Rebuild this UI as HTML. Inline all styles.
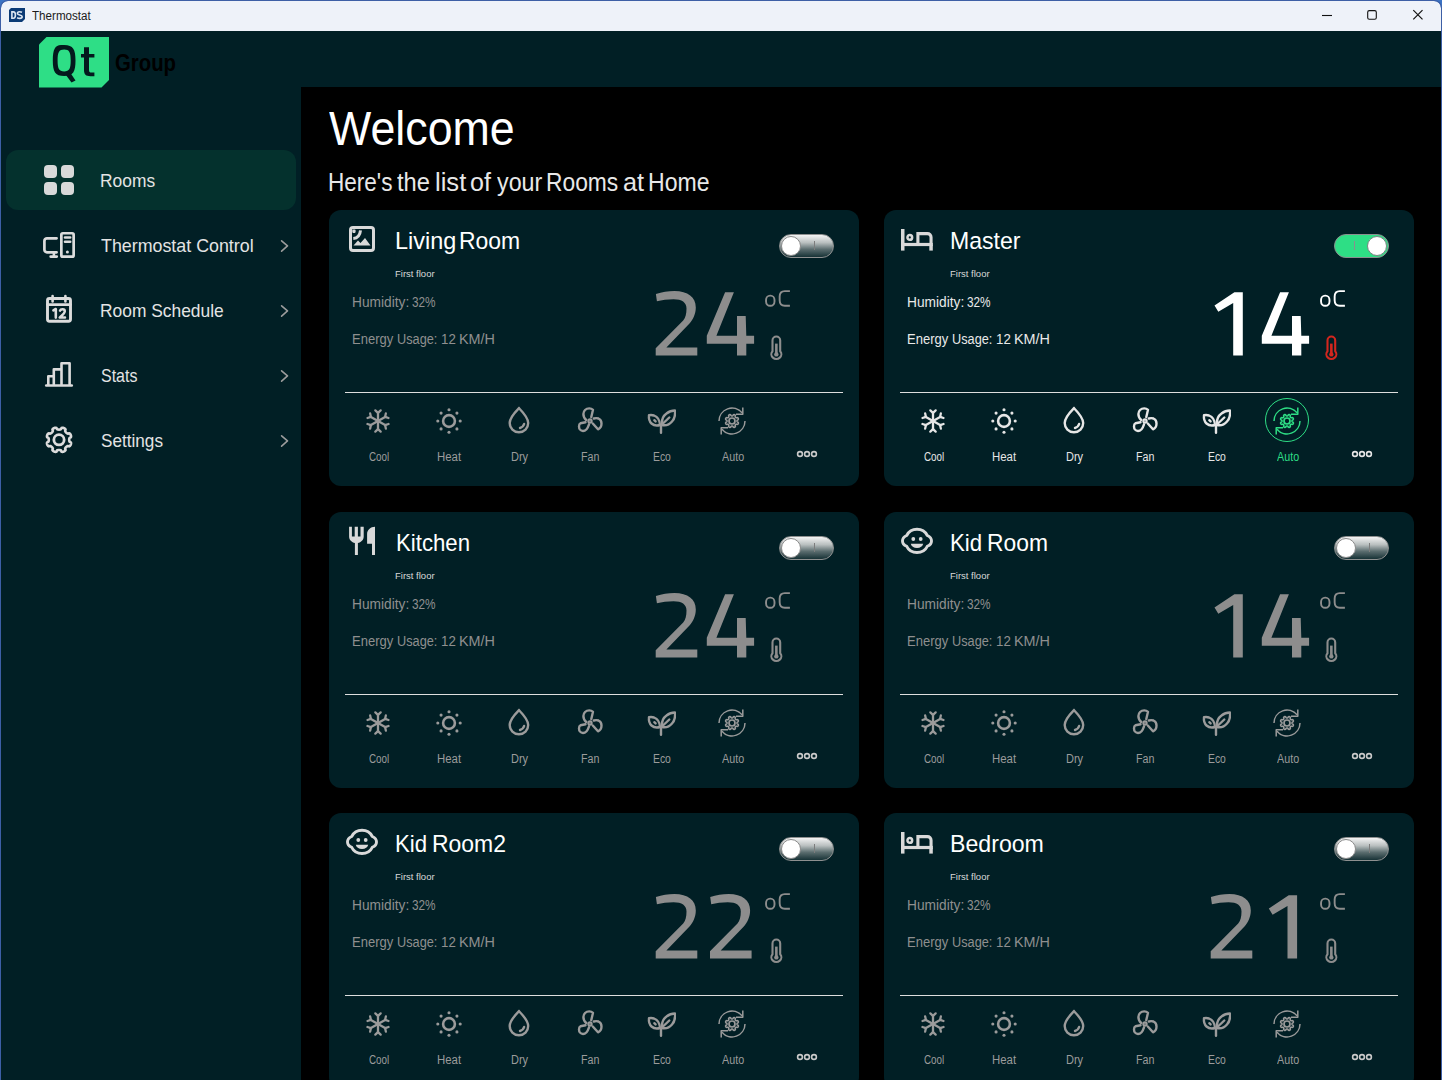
<!DOCTYPE html>
<html><head><meta charset="utf-8"><title>Thermostat</title>
<style>
html,body{margin:0;padding:0;}
body{width:1442px;height:1080px;overflow:hidden;position:relative;background:#3b73c4;font-family:"Liberation Sans",sans-serif;}
#frame{position:absolute;left:0;top:0;width:1440px;height:1079px;border:1px solid #3d5fa6;border-bottom:none;border-radius:8px 8px 0 0;pointer-events:none;}
#titlebar{position:absolute;left:1px;top:1px;width:1440px;height:30px;background:#eef2f9;border-radius:7px 7px 0 0;}
.t{position:absolute;white-space:pre;line-height:1;transform-origin:0 0;}
.card{position:absolute;width:530px;height:276px;border-radius:12px;background:#011f25;}
</style></head><body>
<div style="position:absolute;left:1px;top:30px;width:1440px;height:1050px;background:#011f25"></div><div id="titlebar"></div>
<svg style="position:absolute;left:9px;top:8px" width="16" height="14" viewBox="0 0 16 14">
<path d="M2 0H16V11L13 14H0V2Z" fill="#0b3b76"/>
<path d="M2.9 3.9H4.4C6 3.9 6.4 5 6.4 7.1C6.4 9.2 6 10.3 4.4 10.3H2.9Z" fill="none" stroke="#dce6f2" stroke-width="1.6"/><path d="M13 4.3C12.2 3.9 11.3 3.8 10.4 3.8C9 3.8 8.4 4.5 8.4 5.5C8.4 7.5 13.2 6.5 13.2 8.8C13.2 9.9 12.4 10.4 10.8 10.4C9.8 10.4 8.9 10.2 8.1 9.8" fill="none" stroke="#dce6f2" stroke-width="1.6"/></svg>
<div class="t" style="left:32.01px;top:10.19px;font-size:12.30px;color:#1b1b1b;transform:scaleX(0.9449);">Thermostat</div>
<svg style="position:absolute;left:1300px;top:1px" width="140" height="30" viewBox="0 0 140 30">
<path d="M22 14.5H32" stroke="#111" stroke-width="1.1"/>
<rect x="67.7" y="9.6" width="8.6" height="8.7" rx="1.6" fill="none" stroke="#111" stroke-width="1.1"/>
<path d="M113.3 9.2L122.5 18.4M122.5 9.2L113.3 18.4" stroke="#111" stroke-width="1.2"/>
</svg>
<svg style="position:absolute;left:39px;top:37px" width="70" height="51" viewBox="0 0 70 51">
<path d="M7.5 0H70V43L62.5 50.5H0V7.5Z" fill="#2ede86"/></svg>
<svg style="position:absolute;left:0;top:0" width="120" height="100" viewBox="0 0 120 100">
<path d="M61 45C55 45 52.8 49.5 52.8 60.5C52.8 71.5 55 76 64.2 76C73.3 76 75.5 71.5 75.5 60.5C75.5 49.5 73.3 45 64.2 45Z M64.2 49.6C58.9 49.6 57.6 52.5 57.6 60.5C57.6 68.5 58.9 71.4 64.2 71.4C69.4 71.4 70.7 68.5 70.7 60.5C70.7 52.5 69.4 49.6 64.2 49.6Z" fill="#04191d" fill-rule="evenodd"/>
<path d="M65.5 74.5L71.5 82.5L75.5 80.5L70.5 73Z" fill="#04191d"/>
<path d="M84 47.2H89V53.9H94.4V57.4H89V70C89 72 89.8 72.6 91.5 72.6H94.4V76.2H90.5C85.8 76.2 84 74.5 84 70V57.4H81V53.9H84Z" fill="#04191d"/>
</svg>
<div class="t" style="left:115.29px;top:51.00px;font-size:23.98px;color:#000000;font-weight:bold;transform:scaleX(0.8482);">Group</div>
<div style="position:absolute;left:6px;top:150px;width:290px;height:60px;border-radius:12px;background:#04312d"></div>
<div class="t" style="left:100.41px;top:172.10px;font-size:18.31px;color:#e4e4e4;transform:scaleX(0.9506);">Rooms</div>
<div class="t" style="left:101.35px;top:237.10px;font-size:18.31px;color:#e4e4e4;transform:scaleX(0.9747);">Thermostat Control</div>
<svg style="position:absolute;left:278px;top:237.5px" width="14" height="16" viewBox="0 0 14 16"><path d="M3.6 2.8L9.5 7.9L3.6 13.1" fill="none" stroke="#9c9c9c" stroke-width="1.6" stroke-linecap="round" stroke-linejoin="round"/></svg>
<div class="t" style="left:100.41px;top:302.10px;font-size:18.31px;color:#e4e4e4;transform:scaleX(0.9499);">Room Schedule</div>
<svg style="position:absolute;left:278px;top:302.5px" width="14" height="16" viewBox="0 0 14 16"><path d="M3.6 2.8L9.5 7.9L3.6 13.1" fill="none" stroke="#9c9c9c" stroke-width="1.6" stroke-linecap="round" stroke-linejoin="round"/></svg>
<div class="t" style="left:101.08px;top:367.10px;font-size:18.31px;color:#e4e4e4;transform:scaleX(0.8732);">Stats</div>
<svg style="position:absolute;left:278px;top:367.5px" width="14" height="16" viewBox="0 0 14 16"><path d="M3.6 2.8L9.5 7.9L3.6 13.1" fill="none" stroke="#9c9c9c" stroke-width="1.6" stroke-linecap="round" stroke-linejoin="round"/></svg>
<div class="t" style="left:101.03px;top:432.10px;font-size:18.31px;color:#e4e4e4;transform:scaleX(0.9374);">Settings</div>
<svg style="position:absolute;left:278px;top:432.5px" width="14" height="16" viewBox="0 0 14 16"><path d="M3.6 2.8L9.5 7.9L3.6 13.1" fill="none" stroke="#9c9c9c" stroke-width="1.6" stroke-linecap="round" stroke-linejoin="round"/></svg>
<svg style="position:absolute;left:44px;top:165px" width="30" height="30" viewBox="0 0 30 30" fill="#d9d9d9">
<rect x="0" y="0" width="13" height="13" rx="4"/><rect x="17" y="0" width="13" height="13" rx="4"/>
<rect x="0" y="17" width="13" height="13" rx="4"/><rect x="17" y="17" width="13" height="13" rx="4"/></svg>
<svg style="position:absolute;left:0;top:0" width="300" height="470" viewBox="0 0 300 470" fill="none" stroke="#dcdcdc" stroke-linecap="round" stroke-linejoin="round">
<path d="M56.6 238.3H47A2.6 2.6 0 0 0 44.4 240.9V249.7A2.6 2.6 0 0 0 47 252.3H56.6" stroke-width="2.7"/>
<path d="M53.9 252.5V256.6M50.6 256.6H56.8" stroke-width="2.6"/>
<rect x="61.35" y="233.25" width="12.3" height="23.4" rx="1.5" stroke-width="2.7"/>
<path d="M65 237.5H70.2M65 241.7H70.2" stroke-width="2.6"/>
<circle cx="67.4" cy="251.9" r="1.5" fill="#dcdcdc" stroke="none"/>
<rect x="47.5" y="298.5" width="23" height="22.8" rx="2" stroke-width="2.9"/>
<path d="M47.5 304.6H70.5" stroke-width="2.9"/>
<path d="M52.6 296V301.5M65.4 296V301.5" stroke-width="2.6"/>
<path d="M53.4 310.3L55.8 309V317.6" stroke-width="2.6"/>
<path d="M60 310.6C60.6 308.9 64.8 308.6 64.8 311.2C64.8 313.2 61.5 315.6 59.7 317.6H65" stroke-width="2.5"/>
<path d="M46.2 385.6H71.8" stroke-width="2.5"/>
<path d="M48.3 384.5V376.3H53.8V384.5M53.8 376.3V369.4H61.5V384.5M61.5 369.4V363.2H69.6V384.5" stroke-width="2.6"/>
<circle cx="59" cy="439.8" r="5.15" stroke-width="2.8"/>
<path d="M59.00 429.60 L59.27 429.60 L59.54 429.58 L59.81 429.55 L60.08 429.51 L60.36 429.45 L60.65 429.36 L60.97 429.17 L61.51 427.98 L61.88 427.81 L62.23 427.76 L62.57 427.76 L62.90 427.79 L63.23 427.86 L63.55 427.95 L63.86 428.07 L64.16 428.21 L64.45 428.37 L64.73 428.55 L64.99 428.76 L65.23 429.00 L65.44 429.29 L65.58 429.66 L65.13 430.89 L65.21 431.25 L65.35 431.52 L65.51 431.76 L65.67 431.99 L65.85 432.20 L66.03 432.40 L66.21 432.59 L66.40 432.77 L66.60 432.95 L66.81 433.13 L67.04 433.29 L67.28 433.45 L67.55 433.59 L67.91 433.67 L69.14 433.22 L69.51 433.36 L69.80 433.57 L70.04 433.81 L70.25 434.07 L70.43 434.35 L70.59 434.64 L70.73 434.94 L70.85 435.25 L70.94 435.57 L71.01 435.90 L71.04 436.23 L71.04 436.57 L70.99 436.92 L70.82 437.29 L69.63 437.83 L69.44 438.15 L69.35 438.44 L69.29 438.72 L69.25 438.99 L69.22 439.26 L69.20 439.53 L69.20 439.80 L69.20 440.07 L69.22 440.34 L69.25 440.61 L69.29 440.88 L69.35 441.16 L69.44 441.45 L69.63 441.77 L70.82 442.31 L70.99 442.68 L71.04 443.03 L71.04 443.37 L71.01 443.70 L70.94 444.03 L70.85 444.35 L70.73 444.66 L70.59 444.96 L70.43 445.25 L70.25 445.53 L70.04 445.79 L69.80 446.03 L69.51 446.24 L69.14 446.38 L67.91 445.93 L67.55 446.01 L67.28 446.15 L67.04 446.31 L66.81 446.47 L66.60 446.65 L66.40 446.83 L66.21 447.01 L66.03 447.20 L65.85 447.40 L65.67 447.61 L65.51 447.84 L65.35 448.08 L65.21 448.35 L65.13 448.71 L65.58 449.94 L65.44 450.31 L65.23 450.60 L64.99 450.84 L64.73 451.05 L64.45 451.23 L64.16 451.39 L63.86 451.53 L63.55 451.65 L63.23 451.74 L62.90 451.81 L62.57 451.84 L62.23 451.84 L61.88 451.79 L61.51 451.62 L60.97 450.43 L60.65 450.24 L60.36 450.15 L60.08 450.09 L59.81 450.05 L59.54 450.02 L59.27 450.00 L59.00 450.00 L58.73 450.00 L58.46 450.02 L58.19 450.05 L57.92 450.09 L57.64 450.15 L57.35 450.24 L57.03 450.43 L56.49 451.62 L56.12 451.79 L55.77 451.84 L55.43 451.84 L55.10 451.81 L54.77 451.74 L54.45 451.65 L54.14 451.53 L53.84 451.39 L53.55 451.23 L53.27 451.05 L53.01 450.84 L52.77 450.60 L52.56 450.31 L52.42 449.94 L52.87 448.71 L52.79 448.35 L52.65 448.08 L52.49 447.84 L52.33 447.61 L52.15 447.40 L51.97 447.20 L51.79 447.01 L51.60 446.83 L51.40 446.65 L51.19 446.47 L50.96 446.31 L50.72 446.15 L50.45 446.01 L50.09 445.93 L48.86 446.38 L48.49 446.24 L48.20 446.03 L47.96 445.79 L47.75 445.53 L47.57 445.25 L47.41 444.96 L47.27 444.66 L47.15 444.35 L47.06 444.03 L46.99 443.70 L46.96 443.37 L46.96 443.03 L47.01 442.68 L47.18 442.31 L48.37 441.77 L48.56 441.45 L48.65 441.16 L48.71 440.88 L48.75 440.61 L48.78 440.34 L48.80 440.07 L48.80 439.80 L48.80 439.53 L48.78 439.26 L48.75 438.99 L48.71 438.72 L48.65 438.44 L48.56 438.15 L48.37 437.83 L47.18 437.29 L47.01 436.92 L46.96 436.57 L46.96 436.23 L46.99 435.90 L47.06 435.57 L47.15 435.25 L47.27 434.94 L47.41 434.64 L47.57 434.35 L47.75 434.07 L47.96 433.81 L48.20 433.57 L48.49 433.36 L48.86 433.22 L50.09 433.67 L50.45 433.59 L50.72 433.45 L50.96 433.29 L51.19 433.13 L51.40 432.95 L51.60 432.77 L51.79 432.59 L51.97 432.40 L52.15 432.20 L52.33 431.99 L52.49 431.76 L52.65 431.52 L52.79 431.25 L52.87 430.89 L52.42 429.66 L52.56 429.29 L52.77 429.00 L53.01 428.76 L53.27 428.55 L53.55 428.37 L53.84 428.21 L54.14 428.07 L54.45 427.95 L54.77 427.86 L55.10 427.79 L55.43 427.76 L55.77 427.76 L56.12 427.81 L56.49 427.98 L57.03 429.17 L57.35 429.36 L57.64 429.45 L57.92 429.51 L58.19 429.55 L58.46 429.58 L58.73 429.60Z" stroke-width="2.6"/></svg>
<div style="position:absolute;left:301px;top:87px;width:1141px;height:993px;background:#000"></div>
<div class="t" style="left:329.08px;top:105.41px;font-size:47.24px;color:#ffffff;transform:scaleX(0.9475);">Welcome</div>
<div class="t" style="left:327.90px;top:170.86px;font-size:24.85px;color:#e8e8e8;transform:scaleX(0.9075);">Here's</div>
<div class="t" style="left:397.44px;top:170.86px;font-size:24.85px;color:#e8e8e8;transform:scaleX(0.9529);">the</div>
<div class="t" style="left:434.94px;top:170.86px;font-size:24.85px;color:#e8e8e8;transform:scaleX(1.0286);">list</div>
<div class="t" style="left:470.30px;top:170.86px;font-size:24.85px;color:#e8e8e8;transform:scaleX(1.0071);">of</div>
<div class="t" style="left:496.88px;top:170.86px;font-size:24.85px;color:#e8e8e8;transform:scaleX(0.9364);">your</div>
<div class="t" style="left:546.17px;top:170.86px;font-size:24.85px;color:#e8e8e8;transform:scaleX(0.9181);">Rooms</div>
<div class="t" style="left:622.96px;top:170.86px;font-size:24.85px;color:#e8e8e8;transform:scaleX(1.0162);">at</div>
<div class="t" style="left:648.15px;top:170.86px;font-size:24.85px;color:#e8e8e8;transform:scaleX(0.9280);">Home</div>
<div class="card" style="left:329px;top:210px"></div>
<svg style="position:absolute;left:349px;top:226px" width="26" height="26" viewBox="0 0 26 26">
<rect x="1.5" y="1.5" width="23" height="23" rx="2.5" fill="none" stroke="#d9d9d9" stroke-width="3"/>
<path d="M4.5 19.5L9 14.5L11.5 17L16 12L21.5 19.5Z" fill="#d9d9d9"/>
<path d="M4.3 12.5C8 12.2 11 9.5 11.5 4.3" fill="none" stroke="#d9d9d9" stroke-width="3"/>
<rect x="3.3" y="3.6" width="3.3" height="3.3" rx="0.8" fill="#d9d9d9"/></svg>
<div class="t" style="left:394.72px;top:229.18px;font-size:24.71px;color:#ffffff;transform:scaleX(0.9487);">Living</div>
<div class="t" style="left:459.17px;top:229.18px;font-size:24.71px;color:#ffffff;transform:scaleX(0.9283);">Room</div>
<div class="t" style="left:394.64px;top:269.62px;font-size:8.72px;color:#d8d8d8;transform:scaleX(1.0903);">First floor</div>
<div class="t" style="left:351.90px;top:294.70px;font-size:14.53px;color:#8f8f8f;transform:scaleX(0.9455);">Humidity:</div>
<div class="t" style="left:411.53px;top:294.70px;font-size:14.53px;color:#8f8f8f;transform:scaleX(0.8113);">32%</div>
<div class="t" style="left:352.16px;top:332.20px;font-size:14.53px;color:#8f8f8f;transform:scaleX(0.8965);">Energy</div>
<div class="t" style="left:397.24px;top:332.20px;font-size:14.53px;color:#8f8f8f;transform:scaleX(0.8769);">Usage:</div>
<div class="t" style="left:440.80px;top:332.20px;font-size:14.53px;color:#8f8f8f;transform:scaleX(0.9150);">12</div>
<div class="t" style="left:459.05px;top:332.20px;font-size:14.53px;color:#8f8f8f;transform:scaleX(0.9908);">KM/H</div>
<svg style="position:absolute;left:329px;top:210px" width="480" height="160" viewBox="0 0 480 160" fill="#8d8d8d"><path transform="translate(322.0 0)" d="M4.9 83.9C11 82.3 17 81.1 23.4 81.1C37 81.1 44.8 87.5 44.8 97.5C44.8 104 42 109.5 38.5 113.5L15.4 137.4H46.3V145.6H4.7V138.3L32.2 110.5C34.5 108 35.5 103.5 35.5 98.5C35.5 92.5 31 89.3 22.5 89.3C16.5 89.3 11 90.2 5.9 91.2Z"/><path transform="translate(376.3 0)" d="M19.8 82.2H28.6L11.1 125.7H31.7V105.9H40.4L41 125.7H48.8V133.7H41V145.6H31.7V133.7H1.5V125.7Z"/></svg>
<svg style="position:absolute;left:759px;top:286px" width="36" height="26" viewBox="430 76 36 26" fill="none" stroke="#8d8d8d" stroke-width="1.9"><rect x="437.05" y="85.6" width="8.45" height="10.2" rx="4" ry="4.3"/><path d="M460.9 81.1H455.8C452.3 81.1 450.65 82.9 450.65 86.6V90.3C450.65 94 452.3 95.8 455.8 95.8H460.9"/></svg>
<svg style="position:absolute;left:770px;top:335px" width="14" height="26" viewBox="0 0 14 26" fill="none" stroke="#8d8d8d">
<path d="M2.5 16.2V5.4A3.85 3.85 0 0 1 10.2 5.4V16.2A5 4.7 0 1 1 2.5 16.2Z" stroke-width="2.1"/>
<path d="M6.35 8.6V18" stroke-width="2.6"/><circle cx="6.35" cy="19.4" r="2.2" fill="#8d8d8d" stroke="none"/></svg>
<div style="position:absolute;left:779.2px;top:234px;width:53px;height:22px;border:1px solid #8e9090;border-radius:12px;background:linear-gradient(#f4f4f4 0%,#b9bfbf 35%,#5b6d6f 65%,#173236 100%)"></div>
<div style="position:absolute;left:780.9000000000001px;top:236.2px;width:18px;height:18px;border:1px solid #8a8a8a;border-radius:50%;background:#fff"></div>
<div style="position:absolute;left:814.2px;top:241px;width:1px;height:9px;background:#7d7d7d"></div>
<div style="position:absolute;left:345px;top:392px;width:498px;height:1px;background:#dedede"></div>
<svg style="position:absolute;left:363.0px;top:405.5px" width="30" height="30" viewBox="0 0 30 30" fill="none" stroke="#9b9b9b" stroke-width="2.3" stroke-linecap="round" stroke-linejoin="round"><path d="M15 15L15.00 6.80"/><path d="M15.00 6.80L12.32 4.39"/><path d="M15.00 6.80L17.68 4.39"/><path d="M15 15L22.10 10.90"/><path d="M22.10 10.90L22.85 7.38"/><path d="M22.10 10.90L25.53 12.01"/><path d="M15 15L7.90 10.90"/><path d="M7.90 10.90L4.47 12.01"/><path d="M7.90 10.90L7.15 7.38"/><path d="M15 15L7.90 19.10"/><path d="M7.90 19.10L7.15 22.62"/><path d="M7.90 19.10L4.47 17.99"/><path d="M15 15L15.00 23.20"/><path d="M15.00 23.20L17.68 25.61"/><path d="M15.00 23.20L12.32 25.61"/><path d="M15 15L22.10 19.10"/><path d="M22.10 19.10L25.53 17.99"/><path d="M22.10 19.10L22.85 22.62"/><circle cx="15" cy="15" r="1.8" fill="#9b9b9b" stroke="none"/></svg>
<div class="t" style="left:368.51px;top:449.93px;font-size:13.08px;color:#9b9b9b;transform:scaleX(0.7526);">Cool</div>
<svg style="position:absolute;left:433.5px;top:405.5px" width="30" height="30" viewBox="0 0 30 30"><circle cx="15" cy="15" r="5.9" fill="none" stroke="#9b9b9b" stroke-width="2.6"/><g fill="#9b9b9b"><circle cx="15.00" cy="3.80" r="1.55"/><circle cx="7.08" cy="7.08" r="1.55"/><circle cx="3.80" cy="15.00" r="1.55"/><circle cx="7.08" cy="22.92" r="1.55"/><circle cx="15.00" cy="26.20" r="1.55"/><circle cx="22.92" cy="22.92" r="1.55"/><circle cx="26.20" cy="15.00" r="1.55"/><circle cx="22.92" cy="7.08" r="1.55"/></g></svg>
<div class="t" style="left:436.59px;top:449.93px;font-size:13.08px;color:#9b9b9b;transform:scaleX(0.8720);">Heat</div>
<svg style="position:absolute;left:504.0px;top:405.5px" width="30" height="30" viewBox="0 0 30 30" fill="none" stroke="#9b9b9b" stroke-width="2.4" stroke-linecap="round">
<path d="M15 2.2C11.5 5.8 5.7 11.5 5.7 17.05A9.25 9.25 0 0 0 24.2 17.05C24.2 11.5 18.5 5.8 15 2.2Z"/><path d="M16 22C18 21.4 19.5 20 20.1 18"/></svg>
<div class="t" style="left:510.57px;top:449.93px;font-size:13.08px;color:#9b9b9b;transform:scaleX(0.8424);">Dry</div>
<svg style="position:absolute;left:575.2px;top:405.5px" width="30" height="30" viewBox="0 0 30 30" fill="none" stroke="#9b9b9b" stroke-width="2.4" stroke-linejoin="round" stroke-linecap="round">
<circle cx="15" cy="15" r="1.6" stroke-width="2.2"/>
<path d="M16.3 11L18 3.8C16.8 2.7 15.5 2.4 14.3 2.4C10.8 2.4 8.4 4.8 8.4 8C8.4 10.2 9.5 12.5 11.2 14"/>
<path d="M18.8 12.5C20.5 12 22 12 23.5 12.5C25.5 13.3 26.5 15.5 26.5 17.5C26.5 20 25 22.5 23 23.3L17.8 17.5"/>
<path d="M14 18.3C13 21.5 11 25 8 25C5.5 25 4 22.8 4 20.5C4 19 4.5 17.8 5.5 17.3L10.5 16.3"/></svg>
<div class="t" style="left:581.44px;top:449.93px;font-size:13.08px;color:#9b9b9b;transform:scaleX(0.8177);">Fan</div>
<svg style="position:absolute;left:646.3px;top:405.5px" width="30" height="30" viewBox="0 0 30 30" fill="none" stroke="#9b9b9b" stroke-width="2.4" stroke-linecap="round" stroke-linejoin="round">
<path d="M15 26.8V19.5"/>
<path d="M14 19C13.8 15 12 11 8 9.5C6.5 9 4.5 9 3 9.2C2.7 12 3.3 15.5 5.5 17.5C8 19.7 11 20 14 19Z"/>
<path d="M8.3 14.2L9.6 15.4"/>
<path d="M16 19C15.5 14 17 10 20.5 7.5C23 5.5 26.5 4.5 29 4.5C29.3 8 28.8 12.5 26 15.5C23.5 18.5 19.5 19.8 16 19Z"/>
<path d="M17.5 17L23.3 11.5"/></svg>
<div class="t" style="left:652.72px;top:449.93px;font-size:13.08px;color:#9b9b9b;transform:scaleX(0.7931);">Eco</div>
<svg style="position:absolute;left:717.0px;top:405.5px" width="30" height="30" viewBox="0 0 30 30" fill="none" stroke="#9b9b9b" stroke-width="1.5" stroke-linejoin="round">
<path d="M2 15A13 13 0 0 1 25 6.8"/><path d="M25.8 1.5V8.3H19"/>
<path d="M28 15A13 13 0 0 1 5 23.2"/><path d="M4.2 28.5V21.7H11"/>
<path d="M15.00 10.00 L15.13 9.99 L15.26 9.97 L15.40 9.93 L15.54 9.86 L15.69 9.78 L15.84 9.67 L16.02 9.48 L16.29 8.94 L16.49 8.78 L16.69 8.69 L16.88 8.64 L17.07 8.62 L17.26 8.63 L17.43 8.66 L17.60 8.72 L17.76 8.80 L17.91 8.90 L18.05 9.02 L18.17 9.17 L18.27 9.34 L18.34 9.54 L18.37 9.81 L18.18 10.38 L18.17 10.63 L18.20 10.82 L18.25 10.99 L18.31 11.13 L18.37 11.25 L18.45 11.37 L18.54 11.46 L18.63 11.55 L18.75 11.63 L18.87 11.69 L19.01 11.75 L19.18 11.80 L19.37 11.83 L19.62 11.82 L20.19 11.63 L20.46 11.66 L20.66 11.73 L20.83 11.83 L20.98 11.95 L21.10 12.09 L21.20 12.24 L21.28 12.40 L21.34 12.57 L21.37 12.74 L21.38 12.93 L21.36 13.12 L21.31 13.31 L21.22 13.51 L21.06 13.71 L20.52 13.98 L20.33 14.16 L20.22 14.31 L20.14 14.46 L20.07 14.60 L20.03 14.74 L20.01 14.87 L20.00 15.00 L20.01 15.13 L20.03 15.26 L20.07 15.40 L20.14 15.54 L20.22 15.69 L20.33 15.84 L20.52 16.02 L21.06 16.29 L21.22 16.49 L21.31 16.69 L21.36 16.88 L21.38 17.07 L21.37 17.26 L21.34 17.43 L21.28 17.60 L21.20 17.76 L21.10 17.91 L20.98 18.05 L20.83 18.17 L20.66 18.27 L20.46 18.34 L20.19 18.37 L19.62 18.18 L19.37 18.17 L19.18 18.20 L19.01 18.25 L18.87 18.31 L18.75 18.37 L18.63 18.45 L18.54 18.54 L18.45 18.63 L18.37 18.75 L18.31 18.87 L18.25 19.01 L18.20 19.18 L18.17 19.37 L18.18 19.62 L18.37 20.19 L18.34 20.46 L18.27 20.66 L18.17 20.83 L18.05 20.98 L17.91 21.10 L17.76 21.20 L17.60 21.28 L17.43 21.34 L17.26 21.37 L17.07 21.38 L16.88 21.36 L16.69 21.31 L16.49 21.22 L16.29 21.06 L16.02 20.52 L15.84 20.33 L15.69 20.22 L15.54 20.14 L15.40 20.07 L15.26 20.03 L15.13 20.01 L15.00 20.00 L14.87 20.01 L14.74 20.03 L14.60 20.07 L14.46 20.14 L14.31 20.22 L14.16 20.33 L13.98 20.52 L13.71 21.06 L13.51 21.22 L13.31 21.31 L13.12 21.36 L12.93 21.38 L12.74 21.37 L12.57 21.34 L12.40 21.28 L12.24 21.20 L12.09 21.10 L11.95 20.98 L11.83 20.83 L11.73 20.66 L11.66 20.46 L11.63 20.19 L11.82 19.62 L11.83 19.37 L11.80 19.18 L11.75 19.01 L11.69 18.87 L11.63 18.75 L11.55 18.63 L11.46 18.54 L11.37 18.45 L11.25 18.37 L11.13 18.31 L10.99 18.25 L10.82 18.20 L10.63 18.17 L10.38 18.18 L9.81 18.37 L9.54 18.34 L9.34 18.27 L9.17 18.17 L9.02 18.05 L8.90 17.91 L8.80 17.76 L8.72 17.60 L8.66 17.43 L8.63 17.26 L8.62 17.07 L8.64 16.88 L8.69 16.69 L8.78 16.49 L8.94 16.29 L9.48 16.02 L9.67 15.84 L9.78 15.69 L9.86 15.54 L9.93 15.40 L9.97 15.26 L9.99 15.13 L10.00 15.00 L9.99 14.87 L9.97 14.74 L9.93 14.60 L9.86 14.46 L9.78 14.31 L9.67 14.16 L9.48 13.98 L8.94 13.71 L8.78 13.51 L8.69 13.31 L8.64 13.12 L8.62 12.93 L8.63 12.74 L8.66 12.57 L8.72 12.40 L8.80 12.24 L8.90 12.09 L9.02 11.95 L9.17 11.83 L9.34 11.73 L9.54 11.66 L9.81 11.63 L10.38 11.82 L10.63 11.83 L10.82 11.80 L10.99 11.75 L11.13 11.69 L11.25 11.63 L11.37 11.55 L11.46 11.46 L11.55 11.37 L11.63 11.25 L11.69 11.13 L11.75 10.99 L11.80 10.82 L11.83 10.63 L11.82 10.38 L11.63 9.81 L11.66 9.54 L11.73 9.34 L11.83 9.17 L11.95 9.02 L12.09 8.90 L12.24 8.80 L12.40 8.72 L12.57 8.66 L12.74 8.63 L12.93 8.62 L13.12 8.64 L13.31 8.69 L13.51 8.78 L13.71 8.94 L13.98 9.48 L14.16 9.67 L14.31 9.78 L14.46 9.86 L14.60 9.93 L14.74 9.97 L14.87 9.99Z" stroke-width="1.6"/><circle cx="15" cy="15" r="3.0" stroke-width="1.7"/></svg>
<div class="t" style="left:721.70px;top:449.93px;font-size:13.08px;color:#9b9b9b;transform:scaleX(0.8215);">Auto</div>
<svg style="position:absolute;left:796px;top:450px" width="22" height="9" viewBox="0 0 22 9" fill="none" stroke="#c9c9c9" stroke-width="1.6"><circle cx="4" cy="4" r="2.4"/><circle cx="11" cy="4" r="2.4"/><circle cx="18" cy="4" r="2.4"/></svg>
<div class="card" style="left:884px;top:210px"></div>
<svg style="position:absolute;left:901px;top:229px" width="32" height="23" viewBox="0 0 32 23" fill="none" stroke="#d9d9d9">
<path d="M1.75 0V21.6" stroke-width="3.5"/><path d="M1.75 15.5H31.8" stroke-width="3.2"/><path d="M30.05 15.5V21.6" stroke-width="3.5"/>
<path d="M16.9 15.5V4.65H26.5A3.55 3.55 0 0 1 30.05 8.2V15.5" stroke-width="3.1"/>
<circle cx="8.8" cy="8.4" r="2.35" stroke-width="2.5"/></svg>
<div class="t" style="left:950.45px;top:229.18px;font-size:24.71px;color:#ffffff;transform:scaleX(0.9338);">Master</div>
<div class="t" style="left:949.64px;top:269.62px;font-size:8.72px;color:#d8d8d8;transform:scaleX(1.0903);">First floor</div>
<div class="t" style="left:906.90px;top:294.70px;font-size:14.53px;color:#e9e9e9;transform:scaleX(0.9455);">Humidity:</div>
<div class="t" style="left:966.53px;top:294.70px;font-size:14.53px;color:#e9e9e9;transform:scaleX(0.8113);">32%</div>
<div class="t" style="left:907.16px;top:332.20px;font-size:14.53px;color:#e9e9e9;transform:scaleX(0.8965);">Energy</div>
<div class="t" style="left:952.24px;top:332.20px;font-size:14.53px;color:#e9e9e9;transform:scaleX(0.8769);">Usage:</div>
<div class="t" style="left:995.80px;top:332.20px;font-size:14.53px;color:#e9e9e9;transform:scaleX(0.9150);">12</div>
<div class="t" style="left:1014.05px;top:332.20px;font-size:14.53px;color:#e9e9e9;transform:scaleX(0.9908);">KM/H</div>
<svg style="position:absolute;left:884px;top:210px" width="480" height="160" viewBox="0 0 480 160" fill="#ffffff"><path transform="translate(322.0 0)" d="M8.5 95.6L28.4 82.2H36.8V145.6H27.2V92.9L12.3 101.7Z"/><path transform="translate(376.3 0)" d="M19.8 82.2H28.6L11.1 125.7H31.7V105.9H40.4L41 125.7H48.8V133.7H41V145.6H31.7V133.7H1.5V125.7Z"/></svg>
<svg style="position:absolute;left:1314px;top:286px" width="36" height="26" viewBox="430 76 36 26" fill="none" stroke="#ffffff" stroke-width="1.9"><rect x="437.05" y="85.6" width="8.45" height="10.2" rx="4" ry="4.3"/><path d="M460.9 81.1H455.8C452.3 81.1 450.65 82.9 450.65 86.6V90.3C450.65 94 452.3 95.8 455.8 95.8H460.9"/></svg>
<svg style="position:absolute;left:1325px;top:335px" width="14" height="26" viewBox="0 0 14 26" fill="none" stroke="#d3261e">
<path d="M2.5 16.2V5.4A3.85 3.85 0 0 1 10.2 5.4V16.2A5 4.7 0 1 1 2.5 16.2Z" stroke-width="2.1"/>
<path d="M6.35 8.6V18" stroke-width="2.6"/><circle cx="6.35" cy="19.4" r="2.2" fill="#d3261e" stroke="none"/></svg>
<div style="position:absolute;left:1334.2px;top:234px;width:53px;height:22px;border:1px solid #8a8f8f;border-radius:12px;background:#2ede85"></div>
<div style="position:absolute;left:1366.9px;top:236.2px;width:18px;height:18px;border:1px solid #7d8484;border-radius:50%;background:#fff"></div>
<div style="position:absolute;left:1354.2px;top:241px;width:1px;height:9px;background:#8a8f8f"></div>
<div style="position:absolute;left:900px;top:392px;width:498px;height:1px;background:#dedede"></div>
<svg style="position:absolute;left:918.0px;top:405.5px" width="30" height="30" viewBox="0 0 30 30" fill="none" stroke="#e6e6e6" stroke-width="2.3" stroke-linecap="round" stroke-linejoin="round"><path d="M15 15L15.00 6.80"/><path d="M15.00 6.80L12.32 4.39"/><path d="M15.00 6.80L17.68 4.39"/><path d="M15 15L22.10 10.90"/><path d="M22.10 10.90L22.85 7.38"/><path d="M22.10 10.90L25.53 12.01"/><path d="M15 15L7.90 10.90"/><path d="M7.90 10.90L4.47 12.01"/><path d="M7.90 10.90L7.15 7.38"/><path d="M15 15L7.90 19.10"/><path d="M7.90 19.10L7.15 22.62"/><path d="M7.90 19.10L4.47 17.99"/><path d="M15 15L15.00 23.20"/><path d="M15.00 23.20L17.68 25.61"/><path d="M15.00 23.20L12.32 25.61"/><path d="M15 15L22.10 19.10"/><path d="M22.10 19.10L25.53 17.99"/><path d="M22.10 19.10L22.85 22.62"/><circle cx="15" cy="15" r="1.8" fill="#e6e6e6" stroke="none"/></svg>
<div class="t" style="left:923.51px;top:449.93px;font-size:13.08px;color:#e6e6e6;transform:scaleX(0.7526);">Cool</div>
<svg style="position:absolute;left:988.5px;top:405.5px" width="30" height="30" viewBox="0 0 30 30"><circle cx="15" cy="15" r="5.9" fill="none" stroke="#e6e6e6" stroke-width="2.6"/><g fill="#e6e6e6"><circle cx="15.00" cy="3.80" r="1.55"/><circle cx="7.08" cy="7.08" r="1.55"/><circle cx="3.80" cy="15.00" r="1.55"/><circle cx="7.08" cy="22.92" r="1.55"/><circle cx="15.00" cy="26.20" r="1.55"/><circle cx="22.92" cy="22.92" r="1.55"/><circle cx="26.20" cy="15.00" r="1.55"/><circle cx="22.92" cy="7.08" r="1.55"/></g></svg>
<div class="t" style="left:991.59px;top:449.93px;font-size:13.08px;color:#e6e6e6;transform:scaleX(0.8720);">Heat</div>
<svg style="position:absolute;left:1059.0px;top:405.5px" width="30" height="30" viewBox="0 0 30 30" fill="none" stroke="#e6e6e6" stroke-width="2.4" stroke-linecap="round">
<path d="M15 2.2C11.5 5.8 5.7 11.5 5.7 17.05A9.25 9.25 0 0 0 24.2 17.05C24.2 11.5 18.5 5.8 15 2.2Z"/><path d="M16 22C18 21.4 19.5 20 20.1 18"/></svg>
<div class="t" style="left:1065.57px;top:449.93px;font-size:13.08px;color:#e6e6e6;transform:scaleX(0.8424);">Dry</div>
<svg style="position:absolute;left:1130.2px;top:405.5px" width="30" height="30" viewBox="0 0 30 30" fill="none" stroke="#e6e6e6" stroke-width="2.4" stroke-linejoin="round" stroke-linecap="round">
<circle cx="15" cy="15" r="1.6" stroke-width="2.2"/>
<path d="M16.3 11L18 3.8C16.8 2.7 15.5 2.4 14.3 2.4C10.8 2.4 8.4 4.8 8.4 8C8.4 10.2 9.5 12.5 11.2 14"/>
<path d="M18.8 12.5C20.5 12 22 12 23.5 12.5C25.5 13.3 26.5 15.5 26.5 17.5C26.5 20 25 22.5 23 23.3L17.8 17.5"/>
<path d="M14 18.3C13 21.5 11 25 8 25C5.5 25 4 22.8 4 20.5C4 19 4.5 17.8 5.5 17.3L10.5 16.3"/></svg>
<div class="t" style="left:1136.44px;top:449.93px;font-size:13.08px;color:#e6e6e6;transform:scaleX(0.8177);">Fan</div>
<svg style="position:absolute;left:1201.3px;top:405.5px" width="30" height="30" viewBox="0 0 30 30" fill="none" stroke="#e6e6e6" stroke-width="2.4" stroke-linecap="round" stroke-linejoin="round">
<path d="M15 26.8V19.5"/>
<path d="M14 19C13.8 15 12 11 8 9.5C6.5 9 4.5 9 3 9.2C2.7 12 3.3 15.5 5.5 17.5C8 19.7 11 20 14 19Z"/>
<path d="M8.3 14.2L9.6 15.4"/>
<path d="M16 19C15.5 14 17 10 20.5 7.5C23 5.5 26.5 4.5 29 4.5C29.3 8 28.8 12.5 26 15.5C23.5 18.5 19.5 19.8 16 19Z"/>
<path d="M17.5 17L23.3 11.5"/></svg>
<div class="t" style="left:1207.72px;top:449.93px;font-size:13.08px;color:#e6e6e6;transform:scaleX(0.7931);">Eco</div>
<div style="position:absolute;left:1265.0px;top:398.1px;width:42px;height:42px;border:1.2px solid #2ede85;border-radius:50%"></div>
<svg style="position:absolute;left:1272.0px;top:405.5px" width="30" height="30" viewBox="0 0 30 30" fill="none" stroke="#2ede85" stroke-width="1.5" stroke-linejoin="round">
<path d="M2 15A13 13 0 0 1 25 6.8"/><path d="M25.8 1.5V8.3H19"/>
<path d="M28 15A13 13 0 0 1 5 23.2"/><path d="M4.2 28.5V21.7H11"/>
<path d="M15.00 10.00 L15.13 9.99 L15.26 9.97 L15.40 9.93 L15.54 9.86 L15.69 9.78 L15.84 9.67 L16.02 9.48 L16.29 8.94 L16.49 8.78 L16.69 8.69 L16.88 8.64 L17.07 8.62 L17.26 8.63 L17.43 8.66 L17.60 8.72 L17.76 8.80 L17.91 8.90 L18.05 9.02 L18.17 9.17 L18.27 9.34 L18.34 9.54 L18.37 9.81 L18.18 10.38 L18.17 10.63 L18.20 10.82 L18.25 10.99 L18.31 11.13 L18.37 11.25 L18.45 11.37 L18.54 11.46 L18.63 11.55 L18.75 11.63 L18.87 11.69 L19.01 11.75 L19.18 11.80 L19.37 11.83 L19.62 11.82 L20.19 11.63 L20.46 11.66 L20.66 11.73 L20.83 11.83 L20.98 11.95 L21.10 12.09 L21.20 12.24 L21.28 12.40 L21.34 12.57 L21.37 12.74 L21.38 12.93 L21.36 13.12 L21.31 13.31 L21.22 13.51 L21.06 13.71 L20.52 13.98 L20.33 14.16 L20.22 14.31 L20.14 14.46 L20.07 14.60 L20.03 14.74 L20.01 14.87 L20.00 15.00 L20.01 15.13 L20.03 15.26 L20.07 15.40 L20.14 15.54 L20.22 15.69 L20.33 15.84 L20.52 16.02 L21.06 16.29 L21.22 16.49 L21.31 16.69 L21.36 16.88 L21.38 17.07 L21.37 17.26 L21.34 17.43 L21.28 17.60 L21.20 17.76 L21.10 17.91 L20.98 18.05 L20.83 18.17 L20.66 18.27 L20.46 18.34 L20.19 18.37 L19.62 18.18 L19.37 18.17 L19.18 18.20 L19.01 18.25 L18.87 18.31 L18.75 18.37 L18.63 18.45 L18.54 18.54 L18.45 18.63 L18.37 18.75 L18.31 18.87 L18.25 19.01 L18.20 19.18 L18.17 19.37 L18.18 19.62 L18.37 20.19 L18.34 20.46 L18.27 20.66 L18.17 20.83 L18.05 20.98 L17.91 21.10 L17.76 21.20 L17.60 21.28 L17.43 21.34 L17.26 21.37 L17.07 21.38 L16.88 21.36 L16.69 21.31 L16.49 21.22 L16.29 21.06 L16.02 20.52 L15.84 20.33 L15.69 20.22 L15.54 20.14 L15.40 20.07 L15.26 20.03 L15.13 20.01 L15.00 20.00 L14.87 20.01 L14.74 20.03 L14.60 20.07 L14.46 20.14 L14.31 20.22 L14.16 20.33 L13.98 20.52 L13.71 21.06 L13.51 21.22 L13.31 21.31 L13.12 21.36 L12.93 21.38 L12.74 21.37 L12.57 21.34 L12.40 21.28 L12.24 21.20 L12.09 21.10 L11.95 20.98 L11.83 20.83 L11.73 20.66 L11.66 20.46 L11.63 20.19 L11.82 19.62 L11.83 19.37 L11.80 19.18 L11.75 19.01 L11.69 18.87 L11.63 18.75 L11.55 18.63 L11.46 18.54 L11.37 18.45 L11.25 18.37 L11.13 18.31 L10.99 18.25 L10.82 18.20 L10.63 18.17 L10.38 18.18 L9.81 18.37 L9.54 18.34 L9.34 18.27 L9.17 18.17 L9.02 18.05 L8.90 17.91 L8.80 17.76 L8.72 17.60 L8.66 17.43 L8.63 17.26 L8.62 17.07 L8.64 16.88 L8.69 16.69 L8.78 16.49 L8.94 16.29 L9.48 16.02 L9.67 15.84 L9.78 15.69 L9.86 15.54 L9.93 15.40 L9.97 15.26 L9.99 15.13 L10.00 15.00 L9.99 14.87 L9.97 14.74 L9.93 14.60 L9.86 14.46 L9.78 14.31 L9.67 14.16 L9.48 13.98 L8.94 13.71 L8.78 13.51 L8.69 13.31 L8.64 13.12 L8.62 12.93 L8.63 12.74 L8.66 12.57 L8.72 12.40 L8.80 12.24 L8.90 12.09 L9.02 11.95 L9.17 11.83 L9.34 11.73 L9.54 11.66 L9.81 11.63 L10.38 11.82 L10.63 11.83 L10.82 11.80 L10.99 11.75 L11.13 11.69 L11.25 11.63 L11.37 11.55 L11.46 11.46 L11.55 11.37 L11.63 11.25 L11.69 11.13 L11.75 10.99 L11.80 10.82 L11.83 10.63 L11.82 10.38 L11.63 9.81 L11.66 9.54 L11.73 9.34 L11.83 9.17 L11.95 9.02 L12.09 8.90 L12.24 8.80 L12.40 8.72 L12.57 8.66 L12.74 8.63 L12.93 8.62 L13.12 8.64 L13.31 8.69 L13.51 8.78 L13.71 8.94 L13.98 9.48 L14.16 9.67 L14.31 9.78 L14.46 9.86 L14.60 9.93 L14.74 9.97 L14.87 9.99Z" stroke-width="1.6"/><circle cx="15" cy="15" r="3.0" stroke-width="1.7"/></svg>
<div class="t" style="left:1276.70px;top:449.93px;font-size:13.08px;color:#2ede85;transform:scaleX(0.8215);">Auto</div>
<svg style="position:absolute;left:1351px;top:450px" width="22" height="9" viewBox="0 0 22 9" fill="none" stroke="#e6e6e6" stroke-width="1.6"><circle cx="4" cy="4" r="2.4"/><circle cx="11" cy="4" r="2.4"/><circle cx="18" cy="4" r="2.4"/></svg>
<div class="card" style="left:329px;top:512px"></div>
<svg style="position:absolute;left:348px;top:526px" width="28" height="30" viewBox="0 0 28 30" fill="#d9d9d9">
<path d="M1.1 0.75H3.9V10.4H6.7V0.75H9.9V10.4H12.5V0.75H15.7V10.5C15.7 14 13 16.5 9.9 16.9V29.1H6.9V16.9C3.8 16.5 1.1 14 1.1 10.5Z"/>
<path d="M27 0.75V29.1H24V17.8H19.1V8C19.1 4 22.5 0.75 27 0.75Z"/></svg>
<div class="t" style="left:395.52px;top:531.18px;font-size:24.71px;color:#ffffff;transform:scaleX(0.8982);">Kitchen</div>
<div class="t" style="left:394.64px;top:571.62px;font-size:8.72px;color:#d8d8d8;transform:scaleX(1.0903);">First floor</div>
<div class="t" style="left:351.90px;top:596.70px;font-size:14.53px;color:#8f8f8f;transform:scaleX(0.9455);">Humidity:</div>
<div class="t" style="left:411.53px;top:596.70px;font-size:14.53px;color:#8f8f8f;transform:scaleX(0.8113);">32%</div>
<div class="t" style="left:352.16px;top:634.20px;font-size:14.53px;color:#8f8f8f;transform:scaleX(0.8965);">Energy</div>
<div class="t" style="left:397.24px;top:634.20px;font-size:14.53px;color:#8f8f8f;transform:scaleX(0.8769);">Usage:</div>
<div class="t" style="left:440.80px;top:634.20px;font-size:14.53px;color:#8f8f8f;transform:scaleX(0.9150);">12</div>
<div class="t" style="left:459.05px;top:634.20px;font-size:14.53px;color:#8f8f8f;transform:scaleX(0.9908);">KM/H</div>
<svg style="position:absolute;left:329px;top:512px" width="480" height="160" viewBox="0 0 480 160" fill="#8d8d8d"><path transform="translate(322.0 0)" d="M4.9 83.9C11 82.3 17 81.1 23.4 81.1C37 81.1 44.8 87.5 44.8 97.5C44.8 104 42 109.5 38.5 113.5L15.4 137.4H46.3V145.6H4.7V138.3L32.2 110.5C34.5 108 35.5 103.5 35.5 98.5C35.5 92.5 31 89.3 22.5 89.3C16.5 89.3 11 90.2 5.9 91.2Z"/><path transform="translate(376.3 0)" d="M19.8 82.2H28.6L11.1 125.7H31.7V105.9H40.4L41 125.7H48.8V133.7H41V145.6H31.7V133.7H1.5V125.7Z"/></svg>
<svg style="position:absolute;left:759px;top:588px" width="36" height="26" viewBox="430 76 36 26" fill="none" stroke="#8d8d8d" stroke-width="1.9"><rect x="437.05" y="85.6" width="8.45" height="10.2" rx="4" ry="4.3"/><path d="M460.9 81.1H455.8C452.3 81.1 450.65 82.9 450.65 86.6V90.3C450.65 94 452.3 95.8 455.8 95.8H460.9"/></svg>
<svg style="position:absolute;left:770px;top:637px" width="14" height="26" viewBox="0 0 14 26" fill="none" stroke="#8d8d8d">
<path d="M2.5 16.2V5.4A3.85 3.85 0 0 1 10.2 5.4V16.2A5 4.7 0 1 1 2.5 16.2Z" stroke-width="2.1"/>
<path d="M6.35 8.6V18" stroke-width="2.6"/><circle cx="6.35" cy="19.4" r="2.2" fill="#8d8d8d" stroke="none"/></svg>
<div style="position:absolute;left:779.2px;top:536px;width:53px;height:22px;border:1px solid #8e9090;border-radius:12px;background:linear-gradient(#f4f4f4 0%,#b9bfbf 35%,#5b6d6f 65%,#173236 100%)"></div>
<div style="position:absolute;left:780.9000000000001px;top:538.2px;width:18px;height:18px;border:1px solid #8a8a8a;border-radius:50%;background:#fff"></div>
<div style="position:absolute;left:814.2px;top:543px;width:1px;height:9px;background:#7d7d7d"></div>
<div style="position:absolute;left:345px;top:694px;width:498px;height:1px;background:#dedede"></div>
<svg style="position:absolute;left:363.0px;top:707.5px" width="30" height="30" viewBox="0 0 30 30" fill="none" stroke="#9b9b9b" stroke-width="2.3" stroke-linecap="round" stroke-linejoin="round"><path d="M15 15L15.00 6.80"/><path d="M15.00 6.80L12.32 4.39"/><path d="M15.00 6.80L17.68 4.39"/><path d="M15 15L22.10 10.90"/><path d="M22.10 10.90L22.85 7.38"/><path d="M22.10 10.90L25.53 12.01"/><path d="M15 15L7.90 10.90"/><path d="M7.90 10.90L4.47 12.01"/><path d="M7.90 10.90L7.15 7.38"/><path d="M15 15L7.90 19.10"/><path d="M7.90 19.10L7.15 22.62"/><path d="M7.90 19.10L4.47 17.99"/><path d="M15 15L15.00 23.20"/><path d="M15.00 23.20L17.68 25.61"/><path d="M15.00 23.20L12.32 25.61"/><path d="M15 15L22.10 19.10"/><path d="M22.10 19.10L25.53 17.99"/><path d="M22.10 19.10L22.85 22.62"/><circle cx="15" cy="15" r="1.8" fill="#9b9b9b" stroke="none"/></svg>
<div class="t" style="left:368.51px;top:751.93px;font-size:13.08px;color:#9b9b9b;transform:scaleX(0.7526);">Cool</div>
<svg style="position:absolute;left:433.5px;top:707.5px" width="30" height="30" viewBox="0 0 30 30"><circle cx="15" cy="15" r="5.9" fill="none" stroke="#9b9b9b" stroke-width="2.6"/><g fill="#9b9b9b"><circle cx="15.00" cy="3.80" r="1.55"/><circle cx="7.08" cy="7.08" r="1.55"/><circle cx="3.80" cy="15.00" r="1.55"/><circle cx="7.08" cy="22.92" r="1.55"/><circle cx="15.00" cy="26.20" r="1.55"/><circle cx="22.92" cy="22.92" r="1.55"/><circle cx="26.20" cy="15.00" r="1.55"/><circle cx="22.92" cy="7.08" r="1.55"/></g></svg>
<div class="t" style="left:436.59px;top:751.93px;font-size:13.08px;color:#9b9b9b;transform:scaleX(0.8720);">Heat</div>
<svg style="position:absolute;left:504.0px;top:707.5px" width="30" height="30" viewBox="0 0 30 30" fill="none" stroke="#9b9b9b" stroke-width="2.4" stroke-linecap="round">
<path d="M15 2.2C11.5 5.8 5.7 11.5 5.7 17.05A9.25 9.25 0 0 0 24.2 17.05C24.2 11.5 18.5 5.8 15 2.2Z"/><path d="M16 22C18 21.4 19.5 20 20.1 18"/></svg>
<div class="t" style="left:510.57px;top:751.93px;font-size:13.08px;color:#9b9b9b;transform:scaleX(0.8424);">Dry</div>
<svg style="position:absolute;left:575.2px;top:707.5px" width="30" height="30" viewBox="0 0 30 30" fill="none" stroke="#9b9b9b" stroke-width="2.4" stroke-linejoin="round" stroke-linecap="round">
<circle cx="15" cy="15" r="1.6" stroke-width="2.2"/>
<path d="M16.3 11L18 3.8C16.8 2.7 15.5 2.4 14.3 2.4C10.8 2.4 8.4 4.8 8.4 8C8.4 10.2 9.5 12.5 11.2 14"/>
<path d="M18.8 12.5C20.5 12 22 12 23.5 12.5C25.5 13.3 26.5 15.5 26.5 17.5C26.5 20 25 22.5 23 23.3L17.8 17.5"/>
<path d="M14 18.3C13 21.5 11 25 8 25C5.5 25 4 22.8 4 20.5C4 19 4.5 17.8 5.5 17.3L10.5 16.3"/></svg>
<div class="t" style="left:581.44px;top:751.93px;font-size:13.08px;color:#9b9b9b;transform:scaleX(0.8177);">Fan</div>
<svg style="position:absolute;left:646.3px;top:707.5px" width="30" height="30" viewBox="0 0 30 30" fill="none" stroke="#9b9b9b" stroke-width="2.4" stroke-linecap="round" stroke-linejoin="round">
<path d="M15 26.8V19.5"/>
<path d="M14 19C13.8 15 12 11 8 9.5C6.5 9 4.5 9 3 9.2C2.7 12 3.3 15.5 5.5 17.5C8 19.7 11 20 14 19Z"/>
<path d="M8.3 14.2L9.6 15.4"/>
<path d="M16 19C15.5 14 17 10 20.5 7.5C23 5.5 26.5 4.5 29 4.5C29.3 8 28.8 12.5 26 15.5C23.5 18.5 19.5 19.8 16 19Z"/>
<path d="M17.5 17L23.3 11.5"/></svg>
<div class="t" style="left:652.72px;top:751.93px;font-size:13.08px;color:#9b9b9b;transform:scaleX(0.7931);">Eco</div>
<svg style="position:absolute;left:717.0px;top:707.5px" width="30" height="30" viewBox="0 0 30 30" fill="none" stroke="#9b9b9b" stroke-width="1.5" stroke-linejoin="round">
<path d="M2 15A13 13 0 0 1 25 6.8"/><path d="M25.8 1.5V8.3H19"/>
<path d="M28 15A13 13 0 0 1 5 23.2"/><path d="M4.2 28.5V21.7H11"/>
<path d="M15.00 10.00 L15.13 9.99 L15.26 9.97 L15.40 9.93 L15.54 9.86 L15.69 9.78 L15.84 9.67 L16.02 9.48 L16.29 8.94 L16.49 8.78 L16.69 8.69 L16.88 8.64 L17.07 8.62 L17.26 8.63 L17.43 8.66 L17.60 8.72 L17.76 8.80 L17.91 8.90 L18.05 9.02 L18.17 9.17 L18.27 9.34 L18.34 9.54 L18.37 9.81 L18.18 10.38 L18.17 10.63 L18.20 10.82 L18.25 10.99 L18.31 11.13 L18.37 11.25 L18.45 11.37 L18.54 11.46 L18.63 11.55 L18.75 11.63 L18.87 11.69 L19.01 11.75 L19.18 11.80 L19.37 11.83 L19.62 11.82 L20.19 11.63 L20.46 11.66 L20.66 11.73 L20.83 11.83 L20.98 11.95 L21.10 12.09 L21.20 12.24 L21.28 12.40 L21.34 12.57 L21.37 12.74 L21.38 12.93 L21.36 13.12 L21.31 13.31 L21.22 13.51 L21.06 13.71 L20.52 13.98 L20.33 14.16 L20.22 14.31 L20.14 14.46 L20.07 14.60 L20.03 14.74 L20.01 14.87 L20.00 15.00 L20.01 15.13 L20.03 15.26 L20.07 15.40 L20.14 15.54 L20.22 15.69 L20.33 15.84 L20.52 16.02 L21.06 16.29 L21.22 16.49 L21.31 16.69 L21.36 16.88 L21.38 17.07 L21.37 17.26 L21.34 17.43 L21.28 17.60 L21.20 17.76 L21.10 17.91 L20.98 18.05 L20.83 18.17 L20.66 18.27 L20.46 18.34 L20.19 18.37 L19.62 18.18 L19.37 18.17 L19.18 18.20 L19.01 18.25 L18.87 18.31 L18.75 18.37 L18.63 18.45 L18.54 18.54 L18.45 18.63 L18.37 18.75 L18.31 18.87 L18.25 19.01 L18.20 19.18 L18.17 19.37 L18.18 19.62 L18.37 20.19 L18.34 20.46 L18.27 20.66 L18.17 20.83 L18.05 20.98 L17.91 21.10 L17.76 21.20 L17.60 21.28 L17.43 21.34 L17.26 21.37 L17.07 21.38 L16.88 21.36 L16.69 21.31 L16.49 21.22 L16.29 21.06 L16.02 20.52 L15.84 20.33 L15.69 20.22 L15.54 20.14 L15.40 20.07 L15.26 20.03 L15.13 20.01 L15.00 20.00 L14.87 20.01 L14.74 20.03 L14.60 20.07 L14.46 20.14 L14.31 20.22 L14.16 20.33 L13.98 20.52 L13.71 21.06 L13.51 21.22 L13.31 21.31 L13.12 21.36 L12.93 21.38 L12.74 21.37 L12.57 21.34 L12.40 21.28 L12.24 21.20 L12.09 21.10 L11.95 20.98 L11.83 20.83 L11.73 20.66 L11.66 20.46 L11.63 20.19 L11.82 19.62 L11.83 19.37 L11.80 19.18 L11.75 19.01 L11.69 18.87 L11.63 18.75 L11.55 18.63 L11.46 18.54 L11.37 18.45 L11.25 18.37 L11.13 18.31 L10.99 18.25 L10.82 18.20 L10.63 18.17 L10.38 18.18 L9.81 18.37 L9.54 18.34 L9.34 18.27 L9.17 18.17 L9.02 18.05 L8.90 17.91 L8.80 17.76 L8.72 17.60 L8.66 17.43 L8.63 17.26 L8.62 17.07 L8.64 16.88 L8.69 16.69 L8.78 16.49 L8.94 16.29 L9.48 16.02 L9.67 15.84 L9.78 15.69 L9.86 15.54 L9.93 15.40 L9.97 15.26 L9.99 15.13 L10.00 15.00 L9.99 14.87 L9.97 14.74 L9.93 14.60 L9.86 14.46 L9.78 14.31 L9.67 14.16 L9.48 13.98 L8.94 13.71 L8.78 13.51 L8.69 13.31 L8.64 13.12 L8.62 12.93 L8.63 12.74 L8.66 12.57 L8.72 12.40 L8.80 12.24 L8.90 12.09 L9.02 11.95 L9.17 11.83 L9.34 11.73 L9.54 11.66 L9.81 11.63 L10.38 11.82 L10.63 11.83 L10.82 11.80 L10.99 11.75 L11.13 11.69 L11.25 11.63 L11.37 11.55 L11.46 11.46 L11.55 11.37 L11.63 11.25 L11.69 11.13 L11.75 10.99 L11.80 10.82 L11.83 10.63 L11.82 10.38 L11.63 9.81 L11.66 9.54 L11.73 9.34 L11.83 9.17 L11.95 9.02 L12.09 8.90 L12.24 8.80 L12.40 8.72 L12.57 8.66 L12.74 8.63 L12.93 8.62 L13.12 8.64 L13.31 8.69 L13.51 8.78 L13.71 8.94 L13.98 9.48 L14.16 9.67 L14.31 9.78 L14.46 9.86 L14.60 9.93 L14.74 9.97 L14.87 9.99Z" stroke-width="1.6"/><circle cx="15" cy="15" r="3.0" stroke-width="1.7"/></svg>
<div class="t" style="left:721.70px;top:751.93px;font-size:13.08px;color:#9b9b9b;transform:scaleX(0.8215);">Auto</div>
<svg style="position:absolute;left:796px;top:752px" width="22" height="9" viewBox="0 0 22 9" fill="none" stroke="#c9c9c9" stroke-width="1.6"><circle cx="4" cy="4" r="2.4"/><circle cx="11" cy="4" r="2.4"/><circle cx="18" cy="4" r="2.4"/></svg>
<div class="card" style="left:884px;top:512px"></div>
<svg style="position:absolute;left:901px;top:527px" width="32" height="28" viewBox="0 0 32 28">
<path d="M16 2.3C21 2.3 24.5 5 26.3 8.5C28.5 9.5 30.5 11.5 30.5 13.9C30.5 16.3 28.5 18.3 26.3 19.3C24.5 23 21 25.5 16 25.5C11 25.5 7.5 23 5.7 19.3C3.5 18.3 1.5 16.3 1.5 13.9C1.5 11.5 3.5 9.5 5.7 8.5C7.5 5 11 2.3 16 2.3Z" fill="none" stroke="#d9d9d9" stroke-width="2.9"/>
<circle cx="12.3" cy="12" r="1.9" fill="#d9d9d9"/><circle cx="19.7" cy="12" r="1.9" fill="#d9d9d9"/>
<path d="M9.8 16.8H22.2C21.8 19.5 19.3 21 16 21S10.2 19.5 9.8 16.8Z" fill="#d9d9d9"/></svg>
<div class="t" style="left:950.02px;top:531.18px;font-size:24.71px;color:#ffffff;transform:scaleX(0.8997);">Kid</div>
<div class="t" style="left:987.47px;top:531.18px;font-size:24.71px;color:#ffffff;transform:scaleX(0.9250);">Room</div>
<div class="t" style="left:949.64px;top:571.62px;font-size:8.72px;color:#d8d8d8;transform:scaleX(1.0903);">First floor</div>
<div class="t" style="left:906.90px;top:596.70px;font-size:14.53px;color:#8f8f8f;transform:scaleX(0.9455);">Humidity:</div>
<div class="t" style="left:966.53px;top:596.70px;font-size:14.53px;color:#8f8f8f;transform:scaleX(0.8113);">32%</div>
<div class="t" style="left:907.16px;top:634.20px;font-size:14.53px;color:#8f8f8f;transform:scaleX(0.8965);">Energy</div>
<div class="t" style="left:952.24px;top:634.20px;font-size:14.53px;color:#8f8f8f;transform:scaleX(0.8769);">Usage:</div>
<div class="t" style="left:995.80px;top:634.20px;font-size:14.53px;color:#8f8f8f;transform:scaleX(0.9150);">12</div>
<div class="t" style="left:1014.05px;top:634.20px;font-size:14.53px;color:#8f8f8f;transform:scaleX(0.9908);">KM/H</div>
<svg style="position:absolute;left:884px;top:512px" width="480" height="160" viewBox="0 0 480 160" fill="#8d8d8d"><path transform="translate(322.0 0)" d="M8.5 95.6L28.4 82.2H36.8V145.6H27.2V92.9L12.3 101.7Z"/><path transform="translate(376.3 0)" d="M19.8 82.2H28.6L11.1 125.7H31.7V105.9H40.4L41 125.7H48.8V133.7H41V145.6H31.7V133.7H1.5V125.7Z"/></svg>
<svg style="position:absolute;left:1314px;top:588px" width="36" height="26" viewBox="430 76 36 26" fill="none" stroke="#8d8d8d" stroke-width="1.9"><rect x="437.05" y="85.6" width="8.45" height="10.2" rx="4" ry="4.3"/><path d="M460.9 81.1H455.8C452.3 81.1 450.65 82.9 450.65 86.6V90.3C450.65 94 452.3 95.8 455.8 95.8H460.9"/></svg>
<svg style="position:absolute;left:1325px;top:637px" width="14" height="26" viewBox="0 0 14 26" fill="none" stroke="#8d8d8d">
<path d="M2.5 16.2V5.4A3.85 3.85 0 0 1 10.2 5.4V16.2A5 4.7 0 1 1 2.5 16.2Z" stroke-width="2.1"/>
<path d="M6.35 8.6V18" stroke-width="2.6"/><circle cx="6.35" cy="19.4" r="2.2" fill="#8d8d8d" stroke="none"/></svg>
<div style="position:absolute;left:1334.2px;top:536px;width:53px;height:22px;border:1px solid #8e9090;border-radius:12px;background:linear-gradient(#f4f4f4 0%,#b9bfbf 35%,#5b6d6f 65%,#173236 100%)"></div>
<div style="position:absolute;left:1335.9px;top:538.2px;width:18px;height:18px;border:1px solid #8a8a8a;border-radius:50%;background:#fff"></div>
<div style="position:absolute;left:1369.2px;top:543px;width:1px;height:9px;background:#7d7d7d"></div>
<div style="position:absolute;left:900px;top:694px;width:498px;height:1px;background:#dedede"></div>
<svg style="position:absolute;left:918.0px;top:707.5px" width="30" height="30" viewBox="0 0 30 30" fill="none" stroke="#9b9b9b" stroke-width="2.3" stroke-linecap="round" stroke-linejoin="round"><path d="M15 15L15.00 6.80"/><path d="M15.00 6.80L12.32 4.39"/><path d="M15.00 6.80L17.68 4.39"/><path d="M15 15L22.10 10.90"/><path d="M22.10 10.90L22.85 7.38"/><path d="M22.10 10.90L25.53 12.01"/><path d="M15 15L7.90 10.90"/><path d="M7.90 10.90L4.47 12.01"/><path d="M7.90 10.90L7.15 7.38"/><path d="M15 15L7.90 19.10"/><path d="M7.90 19.10L7.15 22.62"/><path d="M7.90 19.10L4.47 17.99"/><path d="M15 15L15.00 23.20"/><path d="M15.00 23.20L17.68 25.61"/><path d="M15.00 23.20L12.32 25.61"/><path d="M15 15L22.10 19.10"/><path d="M22.10 19.10L25.53 17.99"/><path d="M22.10 19.10L22.85 22.62"/><circle cx="15" cy="15" r="1.8" fill="#9b9b9b" stroke="none"/></svg>
<div class="t" style="left:923.51px;top:751.93px;font-size:13.08px;color:#9b9b9b;transform:scaleX(0.7526);">Cool</div>
<svg style="position:absolute;left:988.5px;top:707.5px" width="30" height="30" viewBox="0 0 30 30"><circle cx="15" cy="15" r="5.9" fill="none" stroke="#9b9b9b" stroke-width="2.6"/><g fill="#9b9b9b"><circle cx="15.00" cy="3.80" r="1.55"/><circle cx="7.08" cy="7.08" r="1.55"/><circle cx="3.80" cy="15.00" r="1.55"/><circle cx="7.08" cy="22.92" r="1.55"/><circle cx="15.00" cy="26.20" r="1.55"/><circle cx="22.92" cy="22.92" r="1.55"/><circle cx="26.20" cy="15.00" r="1.55"/><circle cx="22.92" cy="7.08" r="1.55"/></g></svg>
<div class="t" style="left:991.59px;top:751.93px;font-size:13.08px;color:#9b9b9b;transform:scaleX(0.8720);">Heat</div>
<svg style="position:absolute;left:1059.0px;top:707.5px" width="30" height="30" viewBox="0 0 30 30" fill="none" stroke="#9b9b9b" stroke-width="2.4" stroke-linecap="round">
<path d="M15 2.2C11.5 5.8 5.7 11.5 5.7 17.05A9.25 9.25 0 0 0 24.2 17.05C24.2 11.5 18.5 5.8 15 2.2Z"/><path d="M16 22C18 21.4 19.5 20 20.1 18"/></svg>
<div class="t" style="left:1065.57px;top:751.93px;font-size:13.08px;color:#9b9b9b;transform:scaleX(0.8424);">Dry</div>
<svg style="position:absolute;left:1130.2px;top:707.5px" width="30" height="30" viewBox="0 0 30 30" fill="none" stroke="#9b9b9b" stroke-width="2.4" stroke-linejoin="round" stroke-linecap="round">
<circle cx="15" cy="15" r="1.6" stroke-width="2.2"/>
<path d="M16.3 11L18 3.8C16.8 2.7 15.5 2.4 14.3 2.4C10.8 2.4 8.4 4.8 8.4 8C8.4 10.2 9.5 12.5 11.2 14"/>
<path d="M18.8 12.5C20.5 12 22 12 23.5 12.5C25.5 13.3 26.5 15.5 26.5 17.5C26.5 20 25 22.5 23 23.3L17.8 17.5"/>
<path d="M14 18.3C13 21.5 11 25 8 25C5.5 25 4 22.8 4 20.5C4 19 4.5 17.8 5.5 17.3L10.5 16.3"/></svg>
<div class="t" style="left:1136.44px;top:751.93px;font-size:13.08px;color:#9b9b9b;transform:scaleX(0.8177);">Fan</div>
<svg style="position:absolute;left:1201.3px;top:707.5px" width="30" height="30" viewBox="0 0 30 30" fill="none" stroke="#9b9b9b" stroke-width="2.4" stroke-linecap="round" stroke-linejoin="round">
<path d="M15 26.8V19.5"/>
<path d="M14 19C13.8 15 12 11 8 9.5C6.5 9 4.5 9 3 9.2C2.7 12 3.3 15.5 5.5 17.5C8 19.7 11 20 14 19Z"/>
<path d="M8.3 14.2L9.6 15.4"/>
<path d="M16 19C15.5 14 17 10 20.5 7.5C23 5.5 26.5 4.5 29 4.5C29.3 8 28.8 12.5 26 15.5C23.5 18.5 19.5 19.8 16 19Z"/>
<path d="M17.5 17L23.3 11.5"/></svg>
<div class="t" style="left:1207.72px;top:751.93px;font-size:13.08px;color:#9b9b9b;transform:scaleX(0.7931);">Eco</div>
<svg style="position:absolute;left:1272.0px;top:707.5px" width="30" height="30" viewBox="0 0 30 30" fill="none" stroke="#9b9b9b" stroke-width="1.5" stroke-linejoin="round">
<path d="M2 15A13 13 0 0 1 25 6.8"/><path d="M25.8 1.5V8.3H19"/>
<path d="M28 15A13 13 0 0 1 5 23.2"/><path d="M4.2 28.5V21.7H11"/>
<path d="M15.00 10.00 L15.13 9.99 L15.26 9.97 L15.40 9.93 L15.54 9.86 L15.69 9.78 L15.84 9.67 L16.02 9.48 L16.29 8.94 L16.49 8.78 L16.69 8.69 L16.88 8.64 L17.07 8.62 L17.26 8.63 L17.43 8.66 L17.60 8.72 L17.76 8.80 L17.91 8.90 L18.05 9.02 L18.17 9.17 L18.27 9.34 L18.34 9.54 L18.37 9.81 L18.18 10.38 L18.17 10.63 L18.20 10.82 L18.25 10.99 L18.31 11.13 L18.37 11.25 L18.45 11.37 L18.54 11.46 L18.63 11.55 L18.75 11.63 L18.87 11.69 L19.01 11.75 L19.18 11.80 L19.37 11.83 L19.62 11.82 L20.19 11.63 L20.46 11.66 L20.66 11.73 L20.83 11.83 L20.98 11.95 L21.10 12.09 L21.20 12.24 L21.28 12.40 L21.34 12.57 L21.37 12.74 L21.38 12.93 L21.36 13.12 L21.31 13.31 L21.22 13.51 L21.06 13.71 L20.52 13.98 L20.33 14.16 L20.22 14.31 L20.14 14.46 L20.07 14.60 L20.03 14.74 L20.01 14.87 L20.00 15.00 L20.01 15.13 L20.03 15.26 L20.07 15.40 L20.14 15.54 L20.22 15.69 L20.33 15.84 L20.52 16.02 L21.06 16.29 L21.22 16.49 L21.31 16.69 L21.36 16.88 L21.38 17.07 L21.37 17.26 L21.34 17.43 L21.28 17.60 L21.20 17.76 L21.10 17.91 L20.98 18.05 L20.83 18.17 L20.66 18.27 L20.46 18.34 L20.19 18.37 L19.62 18.18 L19.37 18.17 L19.18 18.20 L19.01 18.25 L18.87 18.31 L18.75 18.37 L18.63 18.45 L18.54 18.54 L18.45 18.63 L18.37 18.75 L18.31 18.87 L18.25 19.01 L18.20 19.18 L18.17 19.37 L18.18 19.62 L18.37 20.19 L18.34 20.46 L18.27 20.66 L18.17 20.83 L18.05 20.98 L17.91 21.10 L17.76 21.20 L17.60 21.28 L17.43 21.34 L17.26 21.37 L17.07 21.38 L16.88 21.36 L16.69 21.31 L16.49 21.22 L16.29 21.06 L16.02 20.52 L15.84 20.33 L15.69 20.22 L15.54 20.14 L15.40 20.07 L15.26 20.03 L15.13 20.01 L15.00 20.00 L14.87 20.01 L14.74 20.03 L14.60 20.07 L14.46 20.14 L14.31 20.22 L14.16 20.33 L13.98 20.52 L13.71 21.06 L13.51 21.22 L13.31 21.31 L13.12 21.36 L12.93 21.38 L12.74 21.37 L12.57 21.34 L12.40 21.28 L12.24 21.20 L12.09 21.10 L11.95 20.98 L11.83 20.83 L11.73 20.66 L11.66 20.46 L11.63 20.19 L11.82 19.62 L11.83 19.37 L11.80 19.18 L11.75 19.01 L11.69 18.87 L11.63 18.75 L11.55 18.63 L11.46 18.54 L11.37 18.45 L11.25 18.37 L11.13 18.31 L10.99 18.25 L10.82 18.20 L10.63 18.17 L10.38 18.18 L9.81 18.37 L9.54 18.34 L9.34 18.27 L9.17 18.17 L9.02 18.05 L8.90 17.91 L8.80 17.76 L8.72 17.60 L8.66 17.43 L8.63 17.26 L8.62 17.07 L8.64 16.88 L8.69 16.69 L8.78 16.49 L8.94 16.29 L9.48 16.02 L9.67 15.84 L9.78 15.69 L9.86 15.54 L9.93 15.40 L9.97 15.26 L9.99 15.13 L10.00 15.00 L9.99 14.87 L9.97 14.74 L9.93 14.60 L9.86 14.46 L9.78 14.31 L9.67 14.16 L9.48 13.98 L8.94 13.71 L8.78 13.51 L8.69 13.31 L8.64 13.12 L8.62 12.93 L8.63 12.74 L8.66 12.57 L8.72 12.40 L8.80 12.24 L8.90 12.09 L9.02 11.95 L9.17 11.83 L9.34 11.73 L9.54 11.66 L9.81 11.63 L10.38 11.82 L10.63 11.83 L10.82 11.80 L10.99 11.75 L11.13 11.69 L11.25 11.63 L11.37 11.55 L11.46 11.46 L11.55 11.37 L11.63 11.25 L11.69 11.13 L11.75 10.99 L11.80 10.82 L11.83 10.63 L11.82 10.38 L11.63 9.81 L11.66 9.54 L11.73 9.34 L11.83 9.17 L11.95 9.02 L12.09 8.90 L12.24 8.80 L12.40 8.72 L12.57 8.66 L12.74 8.63 L12.93 8.62 L13.12 8.64 L13.31 8.69 L13.51 8.78 L13.71 8.94 L13.98 9.48 L14.16 9.67 L14.31 9.78 L14.46 9.86 L14.60 9.93 L14.74 9.97 L14.87 9.99Z" stroke-width="1.6"/><circle cx="15" cy="15" r="3.0" stroke-width="1.7"/></svg>
<div class="t" style="left:1276.70px;top:751.93px;font-size:13.08px;color:#9b9b9b;transform:scaleX(0.8215);">Auto</div>
<svg style="position:absolute;left:1351px;top:752px" width="22" height="9" viewBox="0 0 22 9" fill="none" stroke="#c9c9c9" stroke-width="1.6"><circle cx="4" cy="4" r="2.4"/><circle cx="11" cy="4" r="2.4"/><circle cx="18" cy="4" r="2.4"/></svg>
<div class="card" style="left:329px;top:813px"></div>
<svg style="position:absolute;left:346px;top:828px" width="32" height="28" viewBox="0 0 32 28">
<path d="M16 2.3C21 2.3 24.5 5 26.3 8.5C28.5 9.5 30.5 11.5 30.5 13.9C30.5 16.3 28.5 18.3 26.3 19.3C24.5 23 21 25.5 16 25.5C11 25.5 7.5 23 5.7 19.3C3.5 18.3 1.5 16.3 1.5 13.9C1.5 11.5 3.5 9.5 5.7 8.5C7.5 5 11 2.3 16 2.3Z" fill="none" stroke="#d9d9d9" stroke-width="2.9"/>
<circle cx="12.3" cy="12" r="1.9" fill="#d9d9d9"/><circle cx="19.7" cy="12" r="1.9" fill="#d9d9d9"/>
<path d="M9.8 16.8H22.2C21.8 19.5 19.3 21 16 21S10.2 19.5 9.8 16.8Z" fill="#d9d9d9"/></svg>
<div class="t" style="left:395.02px;top:832.18px;font-size:24.71px;color:#ffffff;transform:scaleX(0.8997);">Kid</div>
<div class="t" style="left:432.46px;top:832.18px;font-size:24.71px;color:#ffffff;transform:scaleX(0.9284);">Room2</div>
<div class="t" style="left:394.64px;top:872.62px;font-size:8.72px;color:#d8d8d8;transform:scaleX(1.0903);">First floor</div>
<div class="t" style="left:351.90px;top:897.70px;font-size:14.53px;color:#8f8f8f;transform:scaleX(0.9455);">Humidity:</div>
<div class="t" style="left:411.53px;top:897.70px;font-size:14.53px;color:#8f8f8f;transform:scaleX(0.8113);">32%</div>
<div class="t" style="left:352.16px;top:935.20px;font-size:14.53px;color:#8f8f8f;transform:scaleX(0.8965);">Energy</div>
<div class="t" style="left:397.24px;top:935.20px;font-size:14.53px;color:#8f8f8f;transform:scaleX(0.8769);">Usage:</div>
<div class="t" style="left:440.80px;top:935.20px;font-size:14.53px;color:#8f8f8f;transform:scaleX(0.9150);">12</div>
<div class="t" style="left:459.05px;top:935.20px;font-size:14.53px;color:#8f8f8f;transform:scaleX(0.9908);">KM/H</div>
<svg style="position:absolute;left:329px;top:813px" width="480" height="160" viewBox="0 0 480 160" fill="#8d8d8d"><path transform="translate(322.0 0)" d="M4.9 83.9C11 82.3 17 81.1 23.4 81.1C37 81.1 44.8 87.5 44.8 97.5C44.8 104 42 109.5 38.5 113.5L15.4 137.4H46.3V145.6H4.7V138.3L32.2 110.5C34.5 108 35.5 103.5 35.5 98.5C35.5 92.5 31 89.3 22.5 89.3C16.5 89.3 11 90.2 5.9 91.2Z"/><path transform="translate(376.3 0)" d="M4.9 83.9C11 82.3 17 81.1 23.4 81.1C37 81.1 44.8 87.5 44.8 97.5C44.8 104 42 109.5 38.5 113.5L15.4 137.4H46.3V145.6H4.7V138.3L32.2 110.5C34.5 108 35.5 103.5 35.5 98.5C35.5 92.5 31 89.3 22.5 89.3C16.5 89.3 11 90.2 5.9 91.2Z"/></svg>
<svg style="position:absolute;left:759px;top:889px" width="36" height="26" viewBox="430 76 36 26" fill="none" stroke="#8d8d8d" stroke-width="1.9"><rect x="437.05" y="85.6" width="8.45" height="10.2" rx="4" ry="4.3"/><path d="M460.9 81.1H455.8C452.3 81.1 450.65 82.9 450.65 86.6V90.3C450.65 94 452.3 95.8 455.8 95.8H460.9"/></svg>
<svg style="position:absolute;left:770px;top:938px" width="14" height="26" viewBox="0 0 14 26" fill="none" stroke="#8d8d8d">
<path d="M2.5 16.2V5.4A3.85 3.85 0 0 1 10.2 5.4V16.2A5 4.7 0 1 1 2.5 16.2Z" stroke-width="2.1"/>
<path d="M6.35 8.6V18" stroke-width="2.6"/><circle cx="6.35" cy="19.4" r="2.2" fill="#8d8d8d" stroke="none"/></svg>
<div style="position:absolute;left:779.2px;top:837px;width:53px;height:22px;border:1px solid #8e9090;border-radius:12px;background:linear-gradient(#f4f4f4 0%,#b9bfbf 35%,#5b6d6f 65%,#173236 100%)"></div>
<div style="position:absolute;left:780.9000000000001px;top:839.2px;width:18px;height:18px;border:1px solid #8a8a8a;border-radius:50%;background:#fff"></div>
<div style="position:absolute;left:814.2px;top:844px;width:1px;height:9px;background:#7d7d7d"></div>
<div style="position:absolute;left:345px;top:995px;width:498px;height:1px;background:#dedede"></div>
<svg style="position:absolute;left:363.0px;top:1008.5px" width="30" height="30" viewBox="0 0 30 30" fill="none" stroke="#9b9b9b" stroke-width="2.3" stroke-linecap="round" stroke-linejoin="round"><path d="M15 15L15.00 6.80"/><path d="M15.00 6.80L12.32 4.39"/><path d="M15.00 6.80L17.68 4.39"/><path d="M15 15L22.10 10.90"/><path d="M22.10 10.90L22.85 7.38"/><path d="M22.10 10.90L25.53 12.01"/><path d="M15 15L7.90 10.90"/><path d="M7.90 10.90L4.47 12.01"/><path d="M7.90 10.90L7.15 7.38"/><path d="M15 15L7.90 19.10"/><path d="M7.90 19.10L7.15 22.62"/><path d="M7.90 19.10L4.47 17.99"/><path d="M15 15L15.00 23.20"/><path d="M15.00 23.20L17.68 25.61"/><path d="M15.00 23.20L12.32 25.61"/><path d="M15 15L22.10 19.10"/><path d="M22.10 19.10L25.53 17.99"/><path d="M22.10 19.10L22.85 22.62"/><circle cx="15" cy="15" r="1.8" fill="#9b9b9b" stroke="none"/></svg>
<div class="t" style="left:368.51px;top:1052.93px;font-size:13.08px;color:#9b9b9b;transform:scaleX(0.7526);">Cool</div>
<svg style="position:absolute;left:433.5px;top:1008.5px" width="30" height="30" viewBox="0 0 30 30"><circle cx="15" cy="15" r="5.9" fill="none" stroke="#9b9b9b" stroke-width="2.6"/><g fill="#9b9b9b"><circle cx="15.00" cy="3.80" r="1.55"/><circle cx="7.08" cy="7.08" r="1.55"/><circle cx="3.80" cy="15.00" r="1.55"/><circle cx="7.08" cy="22.92" r="1.55"/><circle cx="15.00" cy="26.20" r="1.55"/><circle cx="22.92" cy="22.92" r="1.55"/><circle cx="26.20" cy="15.00" r="1.55"/><circle cx="22.92" cy="7.08" r="1.55"/></g></svg>
<div class="t" style="left:436.59px;top:1052.93px;font-size:13.08px;color:#9b9b9b;transform:scaleX(0.8720);">Heat</div>
<svg style="position:absolute;left:504.0px;top:1008.5px" width="30" height="30" viewBox="0 0 30 30" fill="none" stroke="#9b9b9b" stroke-width="2.4" stroke-linecap="round">
<path d="M15 2.2C11.5 5.8 5.7 11.5 5.7 17.05A9.25 9.25 0 0 0 24.2 17.05C24.2 11.5 18.5 5.8 15 2.2Z"/><path d="M16 22C18 21.4 19.5 20 20.1 18"/></svg>
<div class="t" style="left:510.57px;top:1052.93px;font-size:13.08px;color:#9b9b9b;transform:scaleX(0.8424);">Dry</div>
<svg style="position:absolute;left:575.2px;top:1008.5px" width="30" height="30" viewBox="0 0 30 30" fill="none" stroke="#9b9b9b" stroke-width="2.4" stroke-linejoin="round" stroke-linecap="round">
<circle cx="15" cy="15" r="1.6" stroke-width="2.2"/>
<path d="M16.3 11L18 3.8C16.8 2.7 15.5 2.4 14.3 2.4C10.8 2.4 8.4 4.8 8.4 8C8.4 10.2 9.5 12.5 11.2 14"/>
<path d="M18.8 12.5C20.5 12 22 12 23.5 12.5C25.5 13.3 26.5 15.5 26.5 17.5C26.5 20 25 22.5 23 23.3L17.8 17.5"/>
<path d="M14 18.3C13 21.5 11 25 8 25C5.5 25 4 22.8 4 20.5C4 19 4.5 17.8 5.5 17.3L10.5 16.3"/></svg>
<div class="t" style="left:581.44px;top:1052.93px;font-size:13.08px;color:#9b9b9b;transform:scaleX(0.8177);">Fan</div>
<svg style="position:absolute;left:646.3px;top:1008.5px" width="30" height="30" viewBox="0 0 30 30" fill="none" stroke="#9b9b9b" stroke-width="2.4" stroke-linecap="round" stroke-linejoin="round">
<path d="M15 26.8V19.5"/>
<path d="M14 19C13.8 15 12 11 8 9.5C6.5 9 4.5 9 3 9.2C2.7 12 3.3 15.5 5.5 17.5C8 19.7 11 20 14 19Z"/>
<path d="M8.3 14.2L9.6 15.4"/>
<path d="M16 19C15.5 14 17 10 20.5 7.5C23 5.5 26.5 4.5 29 4.5C29.3 8 28.8 12.5 26 15.5C23.5 18.5 19.5 19.8 16 19Z"/>
<path d="M17.5 17L23.3 11.5"/></svg>
<div class="t" style="left:652.72px;top:1052.93px;font-size:13.08px;color:#9b9b9b;transform:scaleX(0.7931);">Eco</div>
<svg style="position:absolute;left:717.0px;top:1008.5px" width="30" height="30" viewBox="0 0 30 30" fill="none" stroke="#9b9b9b" stroke-width="1.5" stroke-linejoin="round">
<path d="M2 15A13 13 0 0 1 25 6.8"/><path d="M25.8 1.5V8.3H19"/>
<path d="M28 15A13 13 0 0 1 5 23.2"/><path d="M4.2 28.5V21.7H11"/>
<path d="M15.00 10.00 L15.13 9.99 L15.26 9.97 L15.40 9.93 L15.54 9.86 L15.69 9.78 L15.84 9.67 L16.02 9.48 L16.29 8.94 L16.49 8.78 L16.69 8.69 L16.88 8.64 L17.07 8.62 L17.26 8.63 L17.43 8.66 L17.60 8.72 L17.76 8.80 L17.91 8.90 L18.05 9.02 L18.17 9.17 L18.27 9.34 L18.34 9.54 L18.37 9.81 L18.18 10.38 L18.17 10.63 L18.20 10.82 L18.25 10.99 L18.31 11.13 L18.37 11.25 L18.45 11.37 L18.54 11.46 L18.63 11.55 L18.75 11.63 L18.87 11.69 L19.01 11.75 L19.18 11.80 L19.37 11.83 L19.62 11.82 L20.19 11.63 L20.46 11.66 L20.66 11.73 L20.83 11.83 L20.98 11.95 L21.10 12.09 L21.20 12.24 L21.28 12.40 L21.34 12.57 L21.37 12.74 L21.38 12.93 L21.36 13.12 L21.31 13.31 L21.22 13.51 L21.06 13.71 L20.52 13.98 L20.33 14.16 L20.22 14.31 L20.14 14.46 L20.07 14.60 L20.03 14.74 L20.01 14.87 L20.00 15.00 L20.01 15.13 L20.03 15.26 L20.07 15.40 L20.14 15.54 L20.22 15.69 L20.33 15.84 L20.52 16.02 L21.06 16.29 L21.22 16.49 L21.31 16.69 L21.36 16.88 L21.38 17.07 L21.37 17.26 L21.34 17.43 L21.28 17.60 L21.20 17.76 L21.10 17.91 L20.98 18.05 L20.83 18.17 L20.66 18.27 L20.46 18.34 L20.19 18.37 L19.62 18.18 L19.37 18.17 L19.18 18.20 L19.01 18.25 L18.87 18.31 L18.75 18.37 L18.63 18.45 L18.54 18.54 L18.45 18.63 L18.37 18.75 L18.31 18.87 L18.25 19.01 L18.20 19.18 L18.17 19.37 L18.18 19.62 L18.37 20.19 L18.34 20.46 L18.27 20.66 L18.17 20.83 L18.05 20.98 L17.91 21.10 L17.76 21.20 L17.60 21.28 L17.43 21.34 L17.26 21.37 L17.07 21.38 L16.88 21.36 L16.69 21.31 L16.49 21.22 L16.29 21.06 L16.02 20.52 L15.84 20.33 L15.69 20.22 L15.54 20.14 L15.40 20.07 L15.26 20.03 L15.13 20.01 L15.00 20.00 L14.87 20.01 L14.74 20.03 L14.60 20.07 L14.46 20.14 L14.31 20.22 L14.16 20.33 L13.98 20.52 L13.71 21.06 L13.51 21.22 L13.31 21.31 L13.12 21.36 L12.93 21.38 L12.74 21.37 L12.57 21.34 L12.40 21.28 L12.24 21.20 L12.09 21.10 L11.95 20.98 L11.83 20.83 L11.73 20.66 L11.66 20.46 L11.63 20.19 L11.82 19.62 L11.83 19.37 L11.80 19.18 L11.75 19.01 L11.69 18.87 L11.63 18.75 L11.55 18.63 L11.46 18.54 L11.37 18.45 L11.25 18.37 L11.13 18.31 L10.99 18.25 L10.82 18.20 L10.63 18.17 L10.38 18.18 L9.81 18.37 L9.54 18.34 L9.34 18.27 L9.17 18.17 L9.02 18.05 L8.90 17.91 L8.80 17.76 L8.72 17.60 L8.66 17.43 L8.63 17.26 L8.62 17.07 L8.64 16.88 L8.69 16.69 L8.78 16.49 L8.94 16.29 L9.48 16.02 L9.67 15.84 L9.78 15.69 L9.86 15.54 L9.93 15.40 L9.97 15.26 L9.99 15.13 L10.00 15.00 L9.99 14.87 L9.97 14.74 L9.93 14.60 L9.86 14.46 L9.78 14.31 L9.67 14.16 L9.48 13.98 L8.94 13.71 L8.78 13.51 L8.69 13.31 L8.64 13.12 L8.62 12.93 L8.63 12.74 L8.66 12.57 L8.72 12.40 L8.80 12.24 L8.90 12.09 L9.02 11.95 L9.17 11.83 L9.34 11.73 L9.54 11.66 L9.81 11.63 L10.38 11.82 L10.63 11.83 L10.82 11.80 L10.99 11.75 L11.13 11.69 L11.25 11.63 L11.37 11.55 L11.46 11.46 L11.55 11.37 L11.63 11.25 L11.69 11.13 L11.75 10.99 L11.80 10.82 L11.83 10.63 L11.82 10.38 L11.63 9.81 L11.66 9.54 L11.73 9.34 L11.83 9.17 L11.95 9.02 L12.09 8.90 L12.24 8.80 L12.40 8.72 L12.57 8.66 L12.74 8.63 L12.93 8.62 L13.12 8.64 L13.31 8.69 L13.51 8.78 L13.71 8.94 L13.98 9.48 L14.16 9.67 L14.31 9.78 L14.46 9.86 L14.60 9.93 L14.74 9.97 L14.87 9.99Z" stroke-width="1.6"/><circle cx="15" cy="15" r="3.0" stroke-width="1.7"/></svg>
<div class="t" style="left:721.70px;top:1052.93px;font-size:13.08px;color:#9b9b9b;transform:scaleX(0.8215);">Auto</div>
<svg style="position:absolute;left:796px;top:1053px" width="22" height="9" viewBox="0 0 22 9" fill="none" stroke="#c9c9c9" stroke-width="1.6"><circle cx="4" cy="4" r="2.4"/><circle cx="11" cy="4" r="2.4"/><circle cx="18" cy="4" r="2.4"/></svg>
<div class="card" style="left:884px;top:813px"></div>
<svg style="position:absolute;left:901px;top:832px" width="32" height="23" viewBox="0 0 32 23" fill="none" stroke="#d9d9d9">
<path d="M1.75 0V21.6" stroke-width="3.5"/><path d="M1.75 15.5H31.8" stroke-width="3.2"/><path d="M30.05 15.5V21.6" stroke-width="3.5"/>
<path d="M16.9 15.5V4.65H26.5A3.55 3.55 0 0 1 30.05 8.2V15.5" stroke-width="3.1"/>
<circle cx="8.8" cy="8.4" r="2.35" stroke-width="2.5"/></svg>
<div class="t" style="left:950.45px;top:832.18px;font-size:24.71px;color:#ffffff;transform:scaleX(0.9367);">Bedroom</div>
<div class="t" style="left:949.64px;top:872.62px;font-size:8.72px;color:#d8d8d8;transform:scaleX(1.0903);">First floor</div>
<div class="t" style="left:906.90px;top:897.70px;font-size:14.53px;color:#8f8f8f;transform:scaleX(0.9455);">Humidity:</div>
<div class="t" style="left:966.53px;top:897.70px;font-size:14.53px;color:#8f8f8f;transform:scaleX(0.8113);">32%</div>
<div class="t" style="left:907.16px;top:935.20px;font-size:14.53px;color:#8f8f8f;transform:scaleX(0.8965);">Energy</div>
<div class="t" style="left:952.24px;top:935.20px;font-size:14.53px;color:#8f8f8f;transform:scaleX(0.8769);">Usage:</div>
<div class="t" style="left:995.80px;top:935.20px;font-size:14.53px;color:#8f8f8f;transform:scaleX(0.9150);">12</div>
<div class="t" style="left:1014.05px;top:935.20px;font-size:14.53px;color:#8f8f8f;transform:scaleX(0.9908);">KM/H</div>
<svg style="position:absolute;left:884px;top:813px" width="480" height="160" viewBox="0 0 480 160" fill="#8d8d8d"><path transform="translate(322.0 0)" d="M4.9 83.9C11 82.3 17 81.1 23.4 81.1C37 81.1 44.8 87.5 44.8 97.5C44.8 104 42 109.5 38.5 113.5L15.4 137.4H46.3V145.6H4.7V138.3L32.2 110.5C34.5 108 35.5 103.5 35.5 98.5C35.5 92.5 31 89.3 22.5 89.3C16.5 89.3 11 90.2 5.9 91.2Z"/><path transform="translate(376.3 0)" d="M8.5 95.6L28.4 82.2H36.8V145.6H27.2V92.9L12.3 101.7Z"/></svg>
<svg style="position:absolute;left:1314px;top:889px" width="36" height="26" viewBox="430 76 36 26" fill="none" stroke="#8d8d8d" stroke-width="1.9"><rect x="437.05" y="85.6" width="8.45" height="10.2" rx="4" ry="4.3"/><path d="M460.9 81.1H455.8C452.3 81.1 450.65 82.9 450.65 86.6V90.3C450.65 94 452.3 95.8 455.8 95.8H460.9"/></svg>
<svg style="position:absolute;left:1325px;top:938px" width="14" height="26" viewBox="0 0 14 26" fill="none" stroke="#8d8d8d">
<path d="M2.5 16.2V5.4A3.85 3.85 0 0 1 10.2 5.4V16.2A5 4.7 0 1 1 2.5 16.2Z" stroke-width="2.1"/>
<path d="M6.35 8.6V18" stroke-width="2.6"/><circle cx="6.35" cy="19.4" r="2.2" fill="#8d8d8d" stroke="none"/></svg>
<div style="position:absolute;left:1334.2px;top:837px;width:53px;height:22px;border:1px solid #8e9090;border-radius:12px;background:linear-gradient(#f4f4f4 0%,#b9bfbf 35%,#5b6d6f 65%,#173236 100%)"></div>
<div style="position:absolute;left:1335.9px;top:839.2px;width:18px;height:18px;border:1px solid #8a8a8a;border-radius:50%;background:#fff"></div>
<div style="position:absolute;left:1369.2px;top:844px;width:1px;height:9px;background:#7d7d7d"></div>
<div style="position:absolute;left:900px;top:995px;width:498px;height:1px;background:#dedede"></div>
<svg style="position:absolute;left:918.0px;top:1008.5px" width="30" height="30" viewBox="0 0 30 30" fill="none" stroke="#9b9b9b" stroke-width="2.3" stroke-linecap="round" stroke-linejoin="round"><path d="M15 15L15.00 6.80"/><path d="M15.00 6.80L12.32 4.39"/><path d="M15.00 6.80L17.68 4.39"/><path d="M15 15L22.10 10.90"/><path d="M22.10 10.90L22.85 7.38"/><path d="M22.10 10.90L25.53 12.01"/><path d="M15 15L7.90 10.90"/><path d="M7.90 10.90L4.47 12.01"/><path d="M7.90 10.90L7.15 7.38"/><path d="M15 15L7.90 19.10"/><path d="M7.90 19.10L7.15 22.62"/><path d="M7.90 19.10L4.47 17.99"/><path d="M15 15L15.00 23.20"/><path d="M15.00 23.20L17.68 25.61"/><path d="M15.00 23.20L12.32 25.61"/><path d="M15 15L22.10 19.10"/><path d="M22.10 19.10L25.53 17.99"/><path d="M22.10 19.10L22.85 22.62"/><circle cx="15" cy="15" r="1.8" fill="#9b9b9b" stroke="none"/></svg>
<div class="t" style="left:923.51px;top:1052.93px;font-size:13.08px;color:#9b9b9b;transform:scaleX(0.7526);">Cool</div>
<svg style="position:absolute;left:988.5px;top:1008.5px" width="30" height="30" viewBox="0 0 30 30"><circle cx="15" cy="15" r="5.9" fill="none" stroke="#9b9b9b" stroke-width="2.6"/><g fill="#9b9b9b"><circle cx="15.00" cy="3.80" r="1.55"/><circle cx="7.08" cy="7.08" r="1.55"/><circle cx="3.80" cy="15.00" r="1.55"/><circle cx="7.08" cy="22.92" r="1.55"/><circle cx="15.00" cy="26.20" r="1.55"/><circle cx="22.92" cy="22.92" r="1.55"/><circle cx="26.20" cy="15.00" r="1.55"/><circle cx="22.92" cy="7.08" r="1.55"/></g></svg>
<div class="t" style="left:991.59px;top:1052.93px;font-size:13.08px;color:#9b9b9b;transform:scaleX(0.8720);">Heat</div>
<svg style="position:absolute;left:1059.0px;top:1008.5px" width="30" height="30" viewBox="0 0 30 30" fill="none" stroke="#9b9b9b" stroke-width="2.4" stroke-linecap="round">
<path d="M15 2.2C11.5 5.8 5.7 11.5 5.7 17.05A9.25 9.25 0 0 0 24.2 17.05C24.2 11.5 18.5 5.8 15 2.2Z"/><path d="M16 22C18 21.4 19.5 20 20.1 18"/></svg>
<div class="t" style="left:1065.57px;top:1052.93px;font-size:13.08px;color:#9b9b9b;transform:scaleX(0.8424);">Dry</div>
<svg style="position:absolute;left:1130.2px;top:1008.5px" width="30" height="30" viewBox="0 0 30 30" fill="none" stroke="#9b9b9b" stroke-width="2.4" stroke-linejoin="round" stroke-linecap="round">
<circle cx="15" cy="15" r="1.6" stroke-width="2.2"/>
<path d="M16.3 11L18 3.8C16.8 2.7 15.5 2.4 14.3 2.4C10.8 2.4 8.4 4.8 8.4 8C8.4 10.2 9.5 12.5 11.2 14"/>
<path d="M18.8 12.5C20.5 12 22 12 23.5 12.5C25.5 13.3 26.5 15.5 26.5 17.5C26.5 20 25 22.5 23 23.3L17.8 17.5"/>
<path d="M14 18.3C13 21.5 11 25 8 25C5.5 25 4 22.8 4 20.5C4 19 4.5 17.8 5.5 17.3L10.5 16.3"/></svg>
<div class="t" style="left:1136.44px;top:1052.93px;font-size:13.08px;color:#9b9b9b;transform:scaleX(0.8177);">Fan</div>
<svg style="position:absolute;left:1201.3px;top:1008.5px" width="30" height="30" viewBox="0 0 30 30" fill="none" stroke="#9b9b9b" stroke-width="2.4" stroke-linecap="round" stroke-linejoin="round">
<path d="M15 26.8V19.5"/>
<path d="M14 19C13.8 15 12 11 8 9.5C6.5 9 4.5 9 3 9.2C2.7 12 3.3 15.5 5.5 17.5C8 19.7 11 20 14 19Z"/>
<path d="M8.3 14.2L9.6 15.4"/>
<path d="M16 19C15.5 14 17 10 20.5 7.5C23 5.5 26.5 4.5 29 4.5C29.3 8 28.8 12.5 26 15.5C23.5 18.5 19.5 19.8 16 19Z"/>
<path d="M17.5 17L23.3 11.5"/></svg>
<div class="t" style="left:1207.72px;top:1052.93px;font-size:13.08px;color:#9b9b9b;transform:scaleX(0.7931);">Eco</div>
<svg style="position:absolute;left:1272.0px;top:1008.5px" width="30" height="30" viewBox="0 0 30 30" fill="none" stroke="#9b9b9b" stroke-width="1.5" stroke-linejoin="round">
<path d="M2 15A13 13 0 0 1 25 6.8"/><path d="M25.8 1.5V8.3H19"/>
<path d="M28 15A13 13 0 0 1 5 23.2"/><path d="M4.2 28.5V21.7H11"/>
<path d="M15.00 10.00 L15.13 9.99 L15.26 9.97 L15.40 9.93 L15.54 9.86 L15.69 9.78 L15.84 9.67 L16.02 9.48 L16.29 8.94 L16.49 8.78 L16.69 8.69 L16.88 8.64 L17.07 8.62 L17.26 8.63 L17.43 8.66 L17.60 8.72 L17.76 8.80 L17.91 8.90 L18.05 9.02 L18.17 9.17 L18.27 9.34 L18.34 9.54 L18.37 9.81 L18.18 10.38 L18.17 10.63 L18.20 10.82 L18.25 10.99 L18.31 11.13 L18.37 11.25 L18.45 11.37 L18.54 11.46 L18.63 11.55 L18.75 11.63 L18.87 11.69 L19.01 11.75 L19.18 11.80 L19.37 11.83 L19.62 11.82 L20.19 11.63 L20.46 11.66 L20.66 11.73 L20.83 11.83 L20.98 11.95 L21.10 12.09 L21.20 12.24 L21.28 12.40 L21.34 12.57 L21.37 12.74 L21.38 12.93 L21.36 13.12 L21.31 13.31 L21.22 13.51 L21.06 13.71 L20.52 13.98 L20.33 14.16 L20.22 14.31 L20.14 14.46 L20.07 14.60 L20.03 14.74 L20.01 14.87 L20.00 15.00 L20.01 15.13 L20.03 15.26 L20.07 15.40 L20.14 15.54 L20.22 15.69 L20.33 15.84 L20.52 16.02 L21.06 16.29 L21.22 16.49 L21.31 16.69 L21.36 16.88 L21.38 17.07 L21.37 17.26 L21.34 17.43 L21.28 17.60 L21.20 17.76 L21.10 17.91 L20.98 18.05 L20.83 18.17 L20.66 18.27 L20.46 18.34 L20.19 18.37 L19.62 18.18 L19.37 18.17 L19.18 18.20 L19.01 18.25 L18.87 18.31 L18.75 18.37 L18.63 18.45 L18.54 18.54 L18.45 18.63 L18.37 18.75 L18.31 18.87 L18.25 19.01 L18.20 19.18 L18.17 19.37 L18.18 19.62 L18.37 20.19 L18.34 20.46 L18.27 20.66 L18.17 20.83 L18.05 20.98 L17.91 21.10 L17.76 21.20 L17.60 21.28 L17.43 21.34 L17.26 21.37 L17.07 21.38 L16.88 21.36 L16.69 21.31 L16.49 21.22 L16.29 21.06 L16.02 20.52 L15.84 20.33 L15.69 20.22 L15.54 20.14 L15.40 20.07 L15.26 20.03 L15.13 20.01 L15.00 20.00 L14.87 20.01 L14.74 20.03 L14.60 20.07 L14.46 20.14 L14.31 20.22 L14.16 20.33 L13.98 20.52 L13.71 21.06 L13.51 21.22 L13.31 21.31 L13.12 21.36 L12.93 21.38 L12.74 21.37 L12.57 21.34 L12.40 21.28 L12.24 21.20 L12.09 21.10 L11.95 20.98 L11.83 20.83 L11.73 20.66 L11.66 20.46 L11.63 20.19 L11.82 19.62 L11.83 19.37 L11.80 19.18 L11.75 19.01 L11.69 18.87 L11.63 18.75 L11.55 18.63 L11.46 18.54 L11.37 18.45 L11.25 18.37 L11.13 18.31 L10.99 18.25 L10.82 18.20 L10.63 18.17 L10.38 18.18 L9.81 18.37 L9.54 18.34 L9.34 18.27 L9.17 18.17 L9.02 18.05 L8.90 17.91 L8.80 17.76 L8.72 17.60 L8.66 17.43 L8.63 17.26 L8.62 17.07 L8.64 16.88 L8.69 16.69 L8.78 16.49 L8.94 16.29 L9.48 16.02 L9.67 15.84 L9.78 15.69 L9.86 15.54 L9.93 15.40 L9.97 15.26 L9.99 15.13 L10.00 15.00 L9.99 14.87 L9.97 14.74 L9.93 14.60 L9.86 14.46 L9.78 14.31 L9.67 14.16 L9.48 13.98 L8.94 13.71 L8.78 13.51 L8.69 13.31 L8.64 13.12 L8.62 12.93 L8.63 12.74 L8.66 12.57 L8.72 12.40 L8.80 12.24 L8.90 12.09 L9.02 11.95 L9.17 11.83 L9.34 11.73 L9.54 11.66 L9.81 11.63 L10.38 11.82 L10.63 11.83 L10.82 11.80 L10.99 11.75 L11.13 11.69 L11.25 11.63 L11.37 11.55 L11.46 11.46 L11.55 11.37 L11.63 11.25 L11.69 11.13 L11.75 10.99 L11.80 10.82 L11.83 10.63 L11.82 10.38 L11.63 9.81 L11.66 9.54 L11.73 9.34 L11.83 9.17 L11.95 9.02 L12.09 8.90 L12.24 8.80 L12.40 8.72 L12.57 8.66 L12.74 8.63 L12.93 8.62 L13.12 8.64 L13.31 8.69 L13.51 8.78 L13.71 8.94 L13.98 9.48 L14.16 9.67 L14.31 9.78 L14.46 9.86 L14.60 9.93 L14.74 9.97 L14.87 9.99Z" stroke-width="1.6"/><circle cx="15" cy="15" r="3.0" stroke-width="1.7"/></svg>
<div class="t" style="left:1276.70px;top:1052.93px;font-size:13.08px;color:#9b9b9b;transform:scaleX(0.8215);">Auto</div>
<svg style="position:absolute;left:1351px;top:1053px" width="22" height="9" viewBox="0 0 22 9" fill="none" stroke="#c9c9c9" stroke-width="1.6"><circle cx="4" cy="4" r="2.4"/><circle cx="11" cy="4" r="2.4"/><circle cx="18" cy="4" r="2.4"/></svg>
<div id="frame"></div>
</body></html>
